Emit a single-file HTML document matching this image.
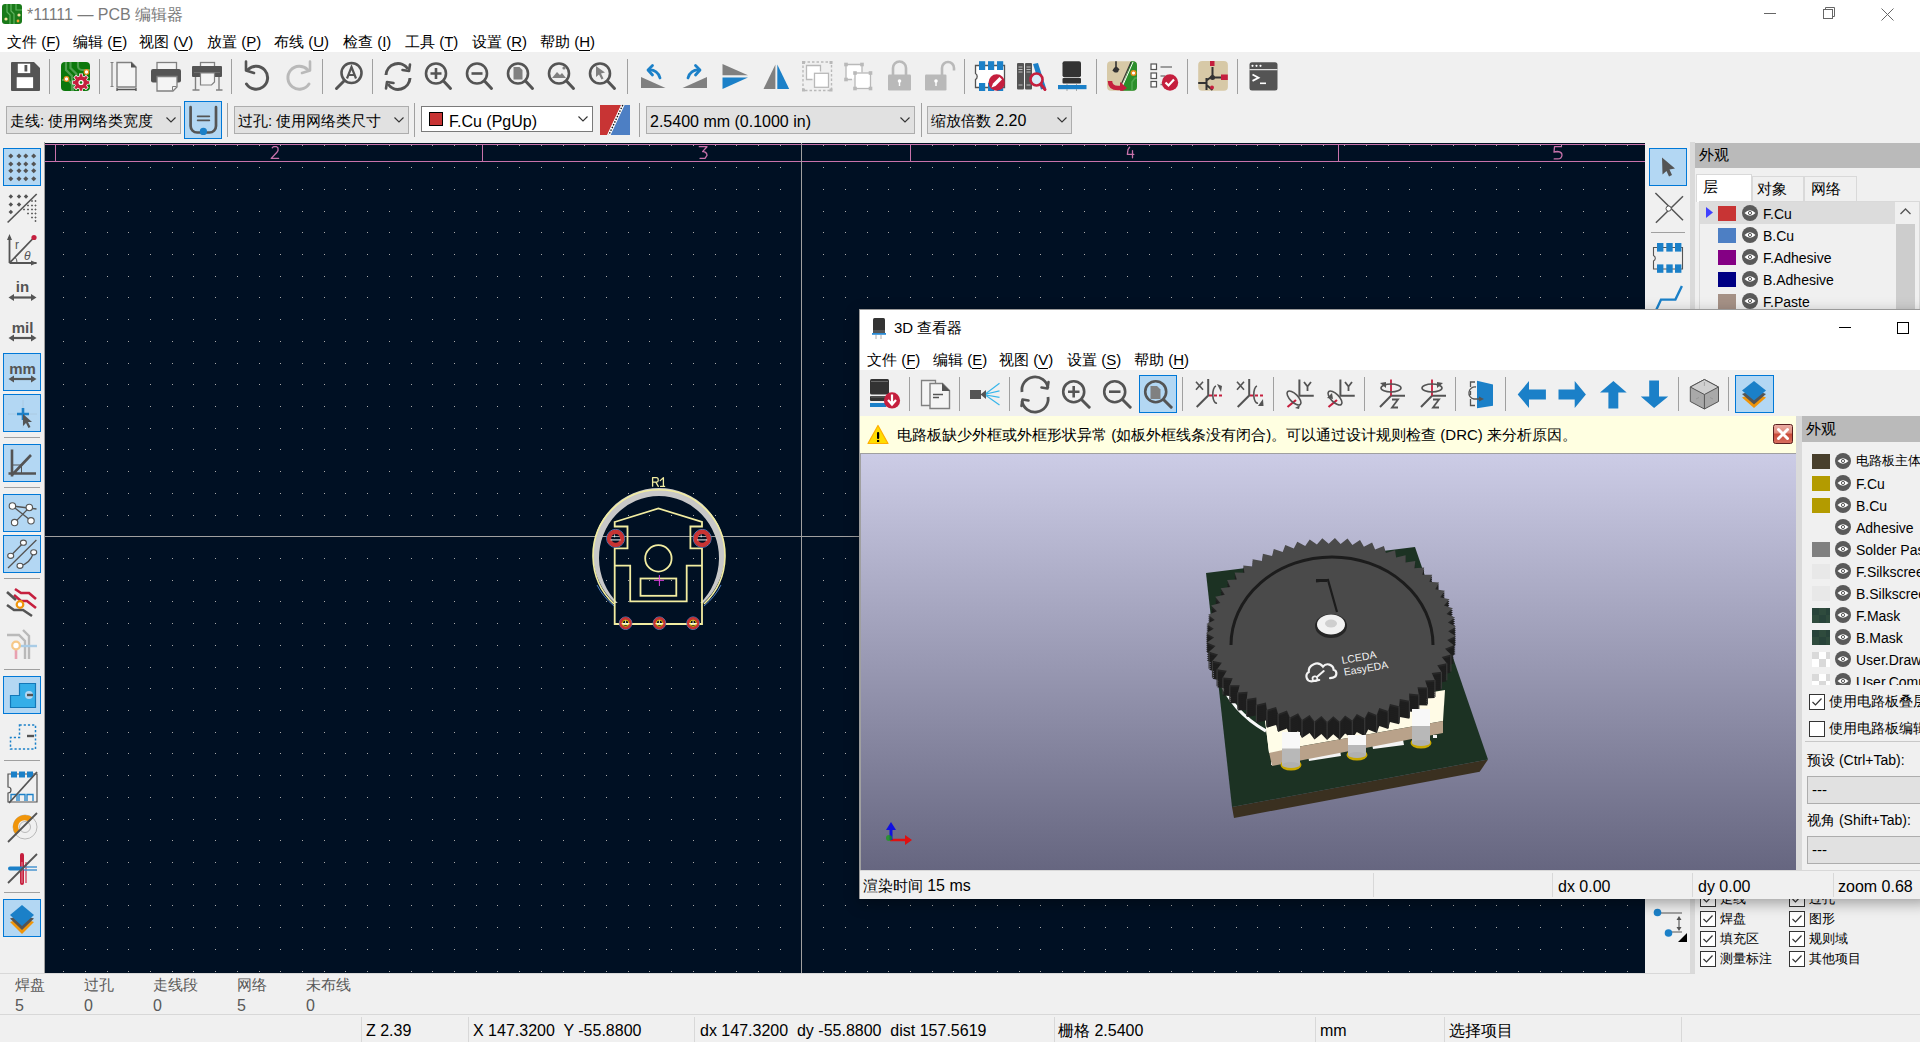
<!DOCTYPE html><html><head><meta charset="utf-8"><style>
*{box-sizing:border-box;margin:0;padding:0}
body{width:1920px;height:1042px;overflow:hidden;position:relative;background:#f0f0f0;font-family:"Liberation Sans", sans-serif;font-size:15px;color:#000}
.a{position:absolute;white-space:nowrap}
.t{position:absolute;white-space:nowrap;line-height:1}
svg{position:absolute;overflow:visible}
.cb{position:absolute;background:#e1e1e1;border:1px solid #adadad}
.sepv{position:absolute;width:1px;background:#a0a0a0}
.seph{position:absolute;height:1px;background:#a0a0a0}
.sel{position:absolute;background:#b3d7f3;border:1px solid #0078d7}
u{text-decoration:none;border-bottom:1px solid currentColor;}
</style></head><body>
<div class="a" style="left:0px;top:0px;width:1920px;height:52px;background:#fff;"></div>
<svg style="left:2px;top:4px;" width="20" height="20" viewBox="0 0 20 20"><rect x="0" y="0" width="20" height="20" rx="3" fill="#1a7a1a"/><path d="M5 0v8l3 3v9M9 0v7l3 3v10M14 0v6h6" stroke="#5fb35f" stroke-width="1.2" fill="none"/><circle cx="17" cy="11" r="1.6" fill="#f8e0a0"/><circle cx="4" cy="15" r="1.6" fill="#f8e0a0"/><circle cx="16" cy="17" r="1.4" fill="#f0a030"/></svg>
<div class="t" style="left:27px;top:7px;font-size:16px;color:#7a7a7a;">*11111 — PCB 编辑器</div>
<svg style="left:1764px;top:13px;" width="13" height="2" viewBox="0 0 13 2"><rect x="0" y="0" width="12" height="1" fill="#666"/></svg>
<svg style="left:1823px;top:7px;" width="14" height="14" viewBox="0 0 14 14"><rect x="0.5" y="2.5" width="9" height="9" fill="none" stroke="#666"/><path d="M2.5 2.5v-2h9v9h-2" fill="none" stroke="#666"/></svg>
<svg style="left:1881px;top:8px;" width="14" height="14" viewBox="0 0 14 14"><path d="M0.5 0.5L12.5 12.5M12.5 0.5L0.5 12.5" stroke="#666" stroke-width="1"/></svg>
<div class="t" style="left:7px;top:34px;font-size:15px;color:#000;">文件 (<u>F</u>)</div>
<div class="t" style="left:73px;top:34px;font-size:15px;color:#000;">编辑 (<u>E</u>)</div>
<div class="t" style="left:139px;top:34px;font-size:15px;color:#000;">视图 (<u>V</u>)</div>
<div class="t" style="left:207px;top:34px;font-size:15px;color:#000;">放置 (<u>P</u>)</div>
<div class="t" style="left:274px;top:34px;font-size:15px;color:#000;">布线 (<u>U</u>)</div>
<div class="t" style="left:343px;top:34px;font-size:15px;color:#000;">检查 (<u>I</u>)</div>
<div class="t" style="left:405px;top:34px;font-size:15px;color:#000;">工具 (<u>T</u>)</div>
<div class="t" style="left:472px;top:34px;font-size:15px;color:#000;">设置 (<u>R</u>)</div>
<div class="t" style="left:540px;top:34px;font-size:15px;color:#000;">帮助 (<u>H</u>)</div>
<div class="a" style="left:49px;top:59px;width:1px;height:35px;background:#a0a0a0;"></div>
<div class="a" style="left:99px;top:59px;width:1px;height:35px;background:#a0a0a0;"></div>
<div class="a" style="left:231px;top:59px;width:1px;height:35px;background:#a0a0a0;"></div>
<div class="a" style="left:322px;top:59px;width:1px;height:35px;background:#a0a0a0;"></div>
<div class="a" style="left:372px;top:59px;width:1px;height:35px;background:#a0a0a0;"></div>
<div class="a" style="left:627px;top:59px;width:1px;height:35px;background:#a0a0a0;"></div>
<div class="a" style="left:964px;top:59px;width:1px;height:35px;background:#a0a0a0;"></div>
<div class="a" style="left:1096px;top:59px;width:1px;height:35px;background:#a0a0a0;"></div>
<div class="a" style="left:1187px;top:59px;width:1px;height:35px;background:#a0a0a0;"></div>
<div class="a" style="left:1237px;top:59px;width:1px;height:35px;background:#a0a0a0;"></div>
<svg style="left:0px;top:52px;" width="1300" height="48" viewBox="0 0 1300 48"><g transform="translate(0,-52)"><path d="M12 62h22l6 6v22a1 1 0 0 1 -1 1h-27a1 1 0 0 1 -1 -1v-27a1 1 0 0 1 1 -1z" fill="#545454"/><rect x="17.8" y="63.7" width="12.4" height="9.4" fill="#fff"/><rect x="24.5" y="65" width="2.8" height="6.5" fill="#545454"/><rect x="16.7" y="77.2" width="16.4" height="10.9" fill="#fff"/><rect x="61" y="62" width="29" height="29" rx="4" fill="#0c780c"/><path d="M66 62v8l6 6v15M70.5 62v6l6 6v4M78 62v4a4 4 0 0 0 4 4h8" stroke="#4e9e4e" stroke-width="2.2" fill="none"/><path d="M62 80h6l5 5v6" stroke="#4e9e4e" stroke-width="2" fill="none"/><circle cx="66.5" cy="79" r="2.3" fill="#fff" stroke="#e98a1a" stroke-width="1.2"/><circle cx="86.5" cy="72" r="2.3" fill="#fff" stroke="#e98a1a" stroke-width="1.2"/><polygon points="87.1,81.1 89.2,81.2 89.2,83.8 87.1,83.9 86.2,85.8 87.7,87.4 85.9,89.2 84.3,87.7 82.4,88.6 82.3,90.7 79.7,90.7 79.6,88.6 77.7,87.7 76.1,89.2 74.3,87.4 75.8,85.8 74.9,83.9 72.8,83.8 72.8,81.2 74.9,81.1 75.8,79.2 74.3,77.6 76.1,75.8 77.7,77.3 79.6,76.4 79.7,74.3 82.3,74.3 82.4,76.4 84.3,77.3 85.9,75.8 87.7,77.6 86.2,79.2" fill="#c51f3e" stroke="#fff" stroke-width="1.4" paint-order="stroke"/><circle cx="81" cy="82.5" r="4.5" fill="#c51f3e"/><circle cx="81" cy="82.5" r="2.6" fill="#fff"/><circle cx="81" cy="82.5" r="1.3" fill="#0c780c"/><path d="M112 62.5v24M110.5 62.5h3M110.5 86.5h3M112 88.5h0" stroke="#808080" stroke-width="1.2" fill="none"/><path d="M117 62.5h14.5l4.5 4.5v20h-19z" fill="#f4f4f4" stroke="#808080" stroke-width="1.4"/><path d="M131 62v5.5h5.5z" fill="#545454"/><path d="M117 89.5h19M117 88v3M136 88v3" stroke="#545454" stroke-width="1.3"/><rect x="157" y="62.5" width="19.5" height="8" fill="#f4f4f4" stroke="#808080" stroke-width="1.3"/><rect x="151" y="69" width="30" height="13.5" rx="2" fill="#545454"/><path d="M157 76.5h20v10.5l-4 4h-16z" fill="#f4f4f4" stroke="#808080" stroke-width="1.3"/><path d="M172.5 90.5v-4h4" fill="none" stroke="#808080" stroke-width="1"/><rect x="200.5" y="62.5" width="14" height="4.5" fill="#f4f4f4" stroke="#808080" stroke-width="1.3"/><rect x="192" y="66" width="30" height="11" rx="1" fill="#545454"/><path d="M194 72.5h26" stroke="#808080" stroke-width="0.6"/><path d="M195.5 77v13M219 77v13M192.5 90h7M216 90h6.5" stroke="#808080" stroke-width="1.4"/><path d="M200.5 73h14v9l-3 3h-11z" fill="#f4f4f4" stroke="#808080" stroke-width="1.2"/><path d="M248 69.5 A11.5 11.5 0 1 1 246.5 84" fill="none" stroke="#545454" stroke-width="3" stroke-linecap="round"/><path d="M246 61.5v9l8 2.5" fill="none" stroke="#545454" stroke-width="2.6" stroke-linecap="round" stroke-linejoin="round"/><path d="M307.5 69.5 A11.5 11.5 0 1 0 309 84" fill="none" stroke="#b9b9b9" stroke-width="3" stroke-linecap="round"/><path d="M310 61.5v9l-8 2.5" fill="none" stroke="#b9b9b9" stroke-width="2.6" stroke-linecap="round" stroke-linejoin="round"/><circle cx="351.5" cy="73" r="10" fill="none" stroke="#545454" stroke-width="2.6"/><path d="M344.5 80.5l-8 8" stroke="#545454" stroke-width="3" stroke-linecap="round"/><path d="M347 78.5l4.5-11.5l4.5 11.5M348.5 75h6" fill="none" stroke="#545454" stroke-width="2.2"/><path d="M386 75 A12 12 0 0 1 408 69" fill="none" stroke="#545454" stroke-width="3"/><path d="M410 78 A12 12 0 0 1 388 84" fill="none" stroke="#545454" stroke-width="3"/><path d="M410 64.5l-1 6.5l-6.5 -1" fill="none" stroke="#545454" stroke-width="2.6" stroke-linecap="round" stroke-linejoin="round"/><path d="M386 88.5l1 -6.5l6.5 1" fill="none" stroke="#545454" stroke-width="2.6" stroke-linecap="round" stroke-linejoin="round"/><circle cx="436" cy="73.5" r="10" fill="none" stroke="#545454" stroke-width="2.6"/><path d="M443.5 81l7 7.5" stroke="#545454" stroke-width="3" stroke-linecap="round"/><path d="M436 68v11M430.5 73.5h11" stroke="#545454" stroke-width="2.6"/><circle cx="477" cy="73.5" r="10" fill="none" stroke="#545454" stroke-width="2.6"/><path d="M484.5 81l7 7.5" stroke="#545454" stroke-width="3" stroke-linecap="round"/><path d="M471.5 73.5h11" stroke="#545454" stroke-width="2.6"/><circle cx="518" cy="73.5" r="10" fill="none" stroke="#545454" stroke-width="2.6"/><path d="M525.5 81l7 7.5" stroke="#545454" stroke-width="3" stroke-linecap="round"/><path d="M513.5 67h6l3 3v9.5h-9z" fill="#808080"/><circle cx="559" cy="73.5" r="10" fill="none" stroke="#545454" stroke-width="2.6"/><path d="M566.5 81l7 7.5" stroke="#545454" stroke-width="3" stroke-linecap="round"/><path d="M552 78l5-6l3 3l2-2l4 5z" fill="#808080"/><circle cx="564" cy="68" r="1.6" fill="#808080"/><circle cx="600" cy="73.5" r="10" fill="none" stroke="#545454" stroke-width="2.6"/><path d="M607.5 81l7 7.5" stroke="#545454" stroke-width="3" stroke-linecap="round"/><path d="M596 66l9 6.5l-4 1l2.5 5l-2 1l-2.5-5l-3 2.5z" fill="#808080"/><polygon points="641,77 641,88 665.5,88" fill="#808080"/><path d="M660 78 A10 10 0 0 0 649 70" fill="none" stroke="#1b80c8" stroke-width="2.8" stroke-linecap="round"/><path d="M652.5 65.5l-4.5 4.5l4.5 5" fill="none" stroke="#1b80c8" stroke-width="2.8" stroke-linecap="round" stroke-linejoin="round"/><polygon points="682.5,88 707,77 707,88" fill="#808080"/><path d="M688 78 A10 10 0 0 1 699 70" fill="none" stroke="#1b80c8" stroke-width="2.8" stroke-linecap="round"/><path d="M695.5 65.5l4.5 4.5l-4.5 5" fill="none" stroke="#1b80c8" stroke-width="2.8" stroke-linecap="round" stroke-linejoin="round"/><polygon points="722.5,64 722.5,75.2 748,75.2" fill="#808080"/><polygon points="722.5,77.4 748,77.4 722.5,89" fill="#1b80c8"/><polygon points="775.4,64.4 775.4,89 763.5,89" fill="#808080"/><polygon points="777.3,64.4 777.3,89 789.2,89" fill="#1b80c8"/><rect x="803" y="62" width="28.5" height="28.5" fill="none" stroke="#b9b9b9" stroke-width="1.4" stroke-dasharray="2.5 2"/><rect x="802" y="61" width="3" height="3" fill="#b9b9b9"/><rect x="829.5" y="61" width="3" height="3" fill="#b9b9b9"/><rect x="802" y="88.5" width="3" height="3" fill="#b9b9b9"/><rect x="829.5" y="88.5" width="3" height="3" fill="#b9b9b9"/><path d="M812.5 79.5h-6v-14h14v6" fill="#fff" stroke="#b9b9b9" stroke-width="1.3"/><rect x="814.5" y="73.3" width="14" height="14" fill="#fff" stroke="#b9b9b9" stroke-width="1.3"/><path d="M852 79.5h-6v-15h16v8" fill="#fff" stroke="#b9b9b9" stroke-width="1.3"/><rect x="855" y="73" width="15.5" height="15.5" fill="#fff" stroke="#b9b9b9" stroke-width="1.3"/><rect x="844.2" y="62.7" width="3.6" height="3.6" fill="#b9b9b9"/><rect x="860.2" y="62.7" width="3.6" height="3.6" fill="#b9b9b9"/><rect x="844.2" y="77.7" width="3.6" height="3.6" fill="#b9b9b9"/><rect x="853.2" y="71.2" width="3.6" height="3.6" fill="#b9b9b9"/><rect x="868.7" y="71.2" width="3.6" height="3.6" fill="#b9b9b9"/><rect x="853.2" y="86.7" width="3.6" height="3.6" fill="#b9b9b9"/><rect x="868.7" y="86.7" width="3.6" height="3.6" fill="#b9b9b9"/><path d="M893 75v-7a6.5 6.5 0 0 1 13 0v7" fill="none" stroke="#b9b9b9" stroke-width="2.6"/><rect x="888" y="74.5" width="23" height="16" rx="1.2" fill="#b9b9b9"/><circle cx="899.5" cy="81" r="1.8" fill="#fff"/><path d="M899.5 81v5" stroke="#fff" stroke-width="1.4"/><path d="M942 75v-7a6 6 0 0 1 12 0v2.5" fill="none" stroke="#b9b9b9" stroke-width="2.6"/><rect x="925" y="74.5" width="21.5" height="16" rx="1.2" fill="#b9b9b9"/><circle cx="936" cy="81" r="1.8" fill="#fff"/><path d="M936 81v5" stroke="#fff" stroke-width="1.4"/><path d="M975.5 65.5h29v22h-29v-8a3.5 3.5 0 0 0 0 -6z" fill="#fff" stroke="#545454" stroke-width="1.3"/><rect x="979" y="61.2" width="6.2" height="8.8" fill="#1b80c8"/><rect x="979" y="83" width="6.2" height="8" fill="#1b80c8"/><rect x="988" y="61.2" width="6.2" height="8.8" fill="#1b80c8"/><rect x="988" y="83" width="6.2" height="8" fill="#1b80c8"/><rect x="997" y="61.2" width="6.2" height="8.8" fill="#1b80c8"/><rect x="997" y="83" width="6.2" height="8" fill="#1b80c8"/><circle cx="996.7" cy="82.5" r="8.2" fill="#c51f3e"/><path d="M991.5 87.5l1.5-4l6.5-6.5l2.5 2.5l-6.5 6.5z" fill="#fff"/><rect x="1017" y="63" width="7" height="26.5" rx="1" fill="#545454"/><rect x="1025" y="63" width="7" height="26.5" rx="1" fill="#545454"/><path d="M1018.5 67h4M1018.5 69.5h4M1018.5 72h4M1026.5 67h4M1026.5 69.5h4M1026.5 72h4M1018.5 85h4M1026.5 85h4" stroke="#bbb" stroke-width="1"/><polygon points="1033,64 1038,63 1046,88 1041,89.5" fill="#1b80c8"/><circle cx="1036.5" cy="79.5" r="6" fill="#d8ecf8" stroke="#c51f3e" stroke-width="2.6"/><path d="M1041 84.5l4 5" stroke="#c51f3e" stroke-width="3" stroke-linecap="round"/><rect x="1062.5" y="61.2" width="18.5" height="16" rx="2" fill="#333"/><rect x="1062.5" y="78" width="18.5" height="5.5" rx="1" fill="#333"/><path d="M1067 84v7M1076.5 84v7" stroke="#aaa" stroke-width="1"/><rect x="1058" y="85" width="28.5" height="4.2" fill="#1b80c8"/><clipPath id="c26"><rect x="1107" y="61.2" width="30" height="29.5" rx="4"/></clipPath><g clip-path="url(#c26)"><rect x="1107" y="61" width="30" height="30" fill="#d7c9a7"/><polygon points="1131,61 1140,61 1140,91 1121,91" fill="#2b8f2b"/><path d="M1131 62L1120.5 86" stroke="#333" stroke-width="1.1"/><path d="M1133 62L1122.5 86" stroke="#fff" stroke-width="1"/><path d="M1116 61v6M1116 67l-3 4M1116 67l3 3" stroke="#333" stroke-width="1.6"/><circle cx="1116" cy="70" r="2.6" fill="#333"/><circle cx="1133.5" cy="73" r="2.3" fill="#fff" stroke="#e98a1a" stroke-width="1.4"/><path d="M1140 78h-5l-3 4v9" stroke="#4ea84e" stroke-width="1.6" fill="none"/><path d="M1110 81q0 7 8 7h3" fill="none" stroke="#c51f3e" stroke-width="4.5"/><polygon points="1120,82 1127,88 1120,93" fill="#c51f3e"/></g><rect x="1151" y="64" width="5.5" height="5.5" fill="#fff" stroke="#545454" stroke-width="1.2"/><rect x="1151" y="73" width="5.5" height="5.5" fill="#fff" stroke="#545454" stroke-width="1.2"/><rect x="1151" y="81.5" width="5.5" height="5.5" fill="#fff" stroke="#545454" stroke-width="1.2"/><path d="M1160.5 67h11.5M1160.5 76h5M1160.5 84.5h3" stroke="#808080" stroke-width="1.3"/><circle cx="1170" cy="82.5" r="8.2" fill="#c51f3e"/><path d="M1165.5 82.5l3 3l5.5-6" fill="none" stroke="#fff" stroke-width="2.2"/><rect x="1198.2" y="61" width="29.7" height="29.8" rx="4" fill="#d7c9a7"/><path d="M1212.5 67v10M1212.5 77.5h9M1198.2 83h8M1206.5 78v12M1206.5 80.5l6-4.5M1206.5 85l6 5" stroke="#333" stroke-width="2" fill="none"/><circle cx="1212.5" cy="77.5" r="2.5" fill="#333"/><rect x="1210" y="61" width="4.5" height="5" fill="#c51f3e"/><rect x="1221" y="74.5" width="6.8" height="5.5" fill="#c51f3e"/><circle cx="1212" cy="87.5" r="2" fill="#c51f3e"/><rect x="1249.5" y="62.2" width="28" height="28.2" rx="2.5" fill="#545454"/><path d="M1249.5 69.7h28" stroke="#fff" stroke-width="1"/><circle cx="1252.5" cy="65.8" r="1.1" fill="#fff"/><circle cx="1256.5" cy="65.8" r="1.1" fill="#fff"/><circle cx="1260.5" cy="65.8" r="1.1" fill="#fff"/><path d="M1252.5 74.5l6 3.2l-6 3.2" fill="none" stroke="#fff" stroke-width="1.8"/><path d="M1260 83.3h6" stroke="#fff" stroke-width="1.6"/></g></svg>
<div class="a" style="left:6px;top:106px;width:175px;height:28px;background:#e1e1e1;border:1px solid #adadad"></div>
<svg style="left:165.5px;top:117.0px;" width="10" height="6" viewBox="0 0 10 6"><path d="M0.5 0.5L5 5L9.5 0.5" fill="none" stroke="#333" stroke-width="1.1"/></svg>
<div class="t" style="left:10px;top:113px;font-size:15px;color:#000;">走线: 使用网络类宽度</div>
<div class="a" style="left:184px;top:101px;width:38px;height:38px;background:#b3d7f3;border:1px solid #0078d7"></div>
<svg style="left:184px;top:101px;" width="38" height="38" viewBox="0 0 38 38"><path d="M6.6 6.2V25a6.5 6.5 0 0 0 6.5 6.5h12.4a6.5 6.5 0 0 0 6.5 -6.5V6.2" fill="none" stroke="#555" stroke-width="2.7" stroke-linecap="round"/><path d="M13.6 15.4h11.8M13.6 19.4h11.8" stroke="#555" stroke-width="1.6" stroke-linecap="round"/><circle cx="19.4" cy="30.4" r="3.6" fill="#1b80c8"/></svg>
<div class="a" style="left:227px;top:103px;width:1px;height:34px;background:#a0a0a0;"></div>
<div class="a" style="left:234px;top:106px;width:175px;height:28px;background:#e1e1e1;border:1px solid #adadad"></div>
<svg style="left:393.5px;top:117.0px;" width="10" height="6" viewBox="0 0 10 6"><path d="M0.5 0.5L5 5L9.5 0.5" fill="none" stroke="#333" stroke-width="1.1"/></svg>
<div class="t" style="left:238px;top:113px;font-size:15px;color:#000;">过孔: 使用网络类尺寸</div>
<div class="a" style="left:414px;top:103px;width:1px;height:34px;background:#a0a0a0;"></div>
<div class="a" style="left:421px;top:106px;width:172px;height:26px;background:#fff;border:1px solid #7a7a7a"></div>
<svg style="left:577.5px;top:116.0px;" width="10" height="6" viewBox="0 0 10 6"><path d="M0.5 0.5L5 5L9.5 0.5" fill="none" stroke="#333" stroke-width="1.1"/></svg>
<div class="a" style="left:429px;top:112px;width:14px;height:14px;background:#c83434;border:1px solid #000"></div>
<div class="t" style="left:449px;top:113.5px;font-size:16px;color:#000;">F.Cu (PgUp)</div>
<svg style="left:600px;top:105px;" width="30" height="30" viewBox="0 0 30 30"><polygon points="0,0 21,0 7,30 0,30" fill="#c83434"/><polygon points="24.6,0 30,0 30,30 10.6,30" fill="#4d7fc4"/><path d="M22.8 0L8.8 30" stroke="#fff" stroke-width="2.6"/><path d="M22.8 0L8.8 30" stroke="#111" stroke-width="1.4" stroke-dasharray="1.5 1.5"/></svg>
<div class="a" style="left:639px;top:103px;width:1px;height:34px;background:#a0a0a0;"></div>
<div class="a" style="left:646px;top:106px;width:269px;height:28px;background:#e1e1e1;border:1px solid #adadad"></div>
<svg style="left:899.5px;top:117.0px;" width="10" height="6" viewBox="0 0 10 6"><path d="M0.5 0.5L5 5L9.5 0.5" fill="none" stroke="#333" stroke-width="1.1"/></svg>
<div class="t" style="left:650px;top:113.5px;font-size:16px;color:#000;">2.5400 mm (0.1000 in)</div>
<div class="a" style="left:921px;top:103px;width:1px;height:34px;background:#a0a0a0;"></div>
<div class="a" style="left:927px;top:106px;width:145px;height:28px;background:#e1e1e1;border:1px solid #adadad"></div>
<svg style="left:1056.5px;top:117.0px;" width="10" height="6" viewBox="0 0 10 6"><path d="M0.5 0.5L5 5L9.5 0.5" fill="none" stroke="#333" stroke-width="1.1"/></svg>
<div class="t" style="left:931px;top:112.5px;font-size:15px;color:#000;">缩放倍数 <span style="font-size:16px">2.20</span></div>
<svg style="left:45px;top:143px;" width="1600" height="830" viewBox="0 0 1600 830"><rect x="0" y="0" width="1600" height="830" fill="#001023"/><path d="M18 2h1v1h-1zM18 24h1v1h-1zM18 46h1v1h-1zM18 68h1v1h-1zM18 89h1v1h-1zM18 111h1v1h-1zM18 133h1v1h-1zM18 154h1v1h-1zM18 176h1v1h-1zM18 198h1v1h-1zM18 220h1v1h-1zM18 241h1v1h-1zM18 263h1v1h-1zM18 285h1v1h-1zM18 306h1v1h-1zM18 328h1v1h-1zM18 350h1v1h-1zM18 372h1v1h-1zM18 393h1v1h-1zM18 415h1v1h-1zM18 437h1v1h-1zM18 458h1v1h-1zM18 480h1v1h-1zM18 502h1v1h-1zM18 524h1v1h-1zM18 545h1v1h-1zM18 567h1v1h-1zM18 589h1v1h-1zM18 610h1v1h-1zM18 632h1v1h-1zM18 654h1v1h-1zM18 676h1v1h-1zM18 697h1v1h-1zM18 719h1v1h-1zM18 741h1v1h-1zM18 762h1v1h-1zM18 784h1v1h-1zM18 806h1v1h-1zM18 828h1v1h-1zM40 2h1v1h-1zM40 24h1v1h-1zM40 46h1v1h-1zM40 68h1v1h-1zM40 89h1v1h-1zM40 111h1v1h-1zM40 133h1v1h-1zM40 154h1v1h-1zM40 176h1v1h-1zM40 198h1v1h-1zM40 220h1v1h-1zM40 241h1v1h-1zM40 263h1v1h-1zM40 285h1v1h-1zM40 306h1v1h-1zM40 328h1v1h-1zM40 350h1v1h-1zM40 372h1v1h-1zM40 393h1v1h-1zM40 415h1v1h-1zM40 437h1v1h-1zM40 458h1v1h-1zM40 480h1v1h-1zM40 502h1v1h-1zM40 524h1v1h-1zM40 545h1v1h-1zM40 567h1v1h-1zM40 589h1v1h-1zM40 610h1v1h-1zM40 632h1v1h-1zM40 654h1v1h-1zM40 676h1v1h-1zM40 697h1v1h-1zM40 719h1v1h-1zM40 741h1v1h-1zM40 762h1v1h-1zM40 784h1v1h-1zM40 806h1v1h-1zM40 828h1v1h-1zM62 2h1v1h-1zM62 24h1v1h-1zM62 46h1v1h-1zM62 68h1v1h-1zM62 89h1v1h-1zM62 111h1v1h-1zM62 133h1v1h-1zM62 154h1v1h-1zM62 176h1v1h-1zM62 198h1v1h-1zM62 220h1v1h-1zM62 241h1v1h-1zM62 263h1v1h-1zM62 285h1v1h-1zM62 306h1v1h-1zM62 328h1v1h-1zM62 350h1v1h-1zM62 372h1v1h-1zM62 393h1v1h-1zM62 415h1v1h-1zM62 437h1v1h-1zM62 458h1v1h-1zM62 480h1v1h-1zM62 502h1v1h-1zM62 524h1v1h-1zM62 545h1v1h-1zM62 567h1v1h-1zM62 589h1v1h-1zM62 610h1v1h-1zM62 632h1v1h-1zM62 654h1v1h-1zM62 676h1v1h-1zM62 697h1v1h-1zM62 719h1v1h-1zM62 741h1v1h-1zM62 762h1v1h-1zM62 784h1v1h-1zM62 806h1v1h-1zM62 828h1v1h-1zM83 2h1v1h-1zM83 24h1v1h-1zM83 46h1v1h-1zM83 68h1v1h-1zM83 89h1v1h-1zM83 111h1v1h-1zM83 133h1v1h-1zM83 154h1v1h-1zM83 176h1v1h-1zM83 198h1v1h-1zM83 220h1v1h-1zM83 241h1v1h-1zM83 263h1v1h-1zM83 285h1v1h-1zM83 306h1v1h-1zM83 328h1v1h-1zM83 350h1v1h-1zM83 372h1v1h-1zM83 393h1v1h-1zM83 415h1v1h-1zM83 437h1v1h-1zM83 458h1v1h-1zM83 480h1v1h-1zM83 502h1v1h-1zM83 524h1v1h-1zM83 545h1v1h-1zM83 567h1v1h-1zM83 589h1v1h-1zM83 610h1v1h-1zM83 632h1v1h-1zM83 654h1v1h-1zM83 676h1v1h-1zM83 697h1v1h-1zM83 719h1v1h-1zM83 741h1v1h-1zM83 762h1v1h-1zM83 784h1v1h-1zM83 806h1v1h-1zM83 828h1v1h-1zM105 2h1v1h-1zM105 24h1v1h-1zM105 46h1v1h-1zM105 68h1v1h-1zM105 89h1v1h-1zM105 111h1v1h-1zM105 133h1v1h-1zM105 154h1v1h-1zM105 176h1v1h-1zM105 198h1v1h-1zM105 220h1v1h-1zM105 241h1v1h-1zM105 263h1v1h-1zM105 285h1v1h-1zM105 306h1v1h-1zM105 328h1v1h-1zM105 350h1v1h-1zM105 372h1v1h-1zM105 393h1v1h-1zM105 415h1v1h-1zM105 437h1v1h-1zM105 458h1v1h-1zM105 480h1v1h-1zM105 502h1v1h-1zM105 524h1v1h-1zM105 545h1v1h-1zM105 567h1v1h-1zM105 589h1v1h-1zM105 610h1v1h-1zM105 632h1v1h-1zM105 654h1v1h-1zM105 676h1v1h-1zM105 697h1v1h-1zM105 719h1v1h-1zM105 741h1v1h-1zM105 762h1v1h-1zM105 784h1v1h-1zM105 806h1v1h-1zM105 828h1v1h-1zM127 2h1v1h-1zM127 24h1v1h-1zM127 46h1v1h-1zM127 68h1v1h-1zM127 89h1v1h-1zM127 111h1v1h-1zM127 133h1v1h-1zM127 154h1v1h-1zM127 176h1v1h-1zM127 198h1v1h-1zM127 220h1v1h-1zM127 241h1v1h-1zM127 263h1v1h-1zM127 285h1v1h-1zM127 306h1v1h-1zM127 328h1v1h-1zM127 350h1v1h-1zM127 372h1v1h-1zM127 393h1v1h-1zM127 415h1v1h-1zM127 437h1v1h-1zM127 458h1v1h-1zM127 480h1v1h-1zM127 502h1v1h-1zM127 524h1v1h-1zM127 545h1v1h-1zM127 567h1v1h-1zM127 589h1v1h-1zM127 610h1v1h-1zM127 632h1v1h-1zM127 654h1v1h-1zM127 676h1v1h-1zM127 697h1v1h-1zM127 719h1v1h-1zM127 741h1v1h-1zM127 762h1v1h-1zM127 784h1v1h-1zM127 806h1v1h-1zM127 828h1v1h-1zM148 2h1v1h-1zM148 24h1v1h-1zM148 46h1v1h-1zM148 68h1v1h-1zM148 89h1v1h-1zM148 111h1v1h-1zM148 133h1v1h-1zM148 154h1v1h-1zM148 176h1v1h-1zM148 198h1v1h-1zM148 220h1v1h-1zM148 241h1v1h-1zM148 263h1v1h-1zM148 285h1v1h-1zM148 306h1v1h-1zM148 328h1v1h-1zM148 350h1v1h-1zM148 372h1v1h-1zM148 393h1v1h-1zM148 415h1v1h-1zM148 437h1v1h-1zM148 458h1v1h-1zM148 480h1v1h-1zM148 502h1v1h-1zM148 524h1v1h-1zM148 545h1v1h-1zM148 567h1v1h-1zM148 589h1v1h-1zM148 610h1v1h-1zM148 632h1v1h-1zM148 654h1v1h-1zM148 676h1v1h-1zM148 697h1v1h-1zM148 719h1v1h-1zM148 741h1v1h-1zM148 762h1v1h-1zM148 784h1v1h-1zM148 806h1v1h-1zM148 828h1v1h-1zM170 2h1v1h-1zM170 24h1v1h-1zM170 46h1v1h-1zM170 68h1v1h-1zM170 89h1v1h-1zM170 111h1v1h-1zM170 133h1v1h-1zM170 154h1v1h-1zM170 176h1v1h-1zM170 198h1v1h-1zM170 220h1v1h-1zM170 241h1v1h-1zM170 263h1v1h-1zM170 285h1v1h-1zM170 306h1v1h-1zM170 328h1v1h-1zM170 350h1v1h-1zM170 372h1v1h-1zM170 393h1v1h-1zM170 415h1v1h-1zM170 437h1v1h-1zM170 458h1v1h-1zM170 480h1v1h-1zM170 502h1v1h-1zM170 524h1v1h-1zM170 545h1v1h-1zM170 567h1v1h-1zM170 589h1v1h-1zM170 610h1v1h-1zM170 632h1v1h-1zM170 654h1v1h-1zM170 676h1v1h-1zM170 697h1v1h-1zM170 719h1v1h-1zM170 741h1v1h-1zM170 762h1v1h-1zM170 784h1v1h-1zM170 806h1v1h-1zM170 828h1v1h-1zM192 2h1v1h-1zM192 24h1v1h-1zM192 46h1v1h-1zM192 68h1v1h-1zM192 89h1v1h-1zM192 111h1v1h-1zM192 133h1v1h-1zM192 154h1v1h-1zM192 176h1v1h-1zM192 198h1v1h-1zM192 220h1v1h-1zM192 241h1v1h-1zM192 263h1v1h-1zM192 285h1v1h-1zM192 306h1v1h-1zM192 328h1v1h-1zM192 350h1v1h-1zM192 372h1v1h-1zM192 393h1v1h-1zM192 415h1v1h-1zM192 437h1v1h-1zM192 458h1v1h-1zM192 480h1v1h-1zM192 502h1v1h-1zM192 524h1v1h-1zM192 545h1v1h-1zM192 567h1v1h-1zM192 589h1v1h-1zM192 610h1v1h-1zM192 632h1v1h-1zM192 654h1v1h-1zM192 676h1v1h-1zM192 697h1v1h-1zM192 719h1v1h-1zM192 741h1v1h-1zM192 762h1v1h-1zM192 784h1v1h-1zM192 806h1v1h-1zM192 828h1v1h-1zM214 2h1v1h-1zM214 24h1v1h-1zM214 46h1v1h-1zM214 68h1v1h-1zM214 89h1v1h-1zM214 111h1v1h-1zM214 133h1v1h-1zM214 154h1v1h-1zM214 176h1v1h-1zM214 198h1v1h-1zM214 220h1v1h-1zM214 241h1v1h-1zM214 263h1v1h-1zM214 285h1v1h-1zM214 306h1v1h-1zM214 328h1v1h-1zM214 350h1v1h-1zM214 372h1v1h-1zM214 393h1v1h-1zM214 415h1v1h-1zM214 437h1v1h-1zM214 458h1v1h-1zM214 480h1v1h-1zM214 502h1v1h-1zM214 524h1v1h-1zM214 545h1v1h-1zM214 567h1v1h-1zM214 589h1v1h-1zM214 610h1v1h-1zM214 632h1v1h-1zM214 654h1v1h-1zM214 676h1v1h-1zM214 697h1v1h-1zM214 719h1v1h-1zM214 741h1v1h-1zM214 762h1v1h-1zM214 784h1v1h-1zM214 806h1v1h-1zM214 828h1v1h-1zM235 2h1v1h-1zM235 24h1v1h-1zM235 46h1v1h-1zM235 68h1v1h-1zM235 89h1v1h-1zM235 111h1v1h-1zM235 133h1v1h-1zM235 154h1v1h-1zM235 176h1v1h-1zM235 198h1v1h-1zM235 220h1v1h-1zM235 241h1v1h-1zM235 263h1v1h-1zM235 285h1v1h-1zM235 306h1v1h-1zM235 328h1v1h-1zM235 350h1v1h-1zM235 372h1v1h-1zM235 393h1v1h-1zM235 415h1v1h-1zM235 437h1v1h-1zM235 458h1v1h-1zM235 480h1v1h-1zM235 502h1v1h-1zM235 524h1v1h-1zM235 545h1v1h-1zM235 567h1v1h-1zM235 589h1v1h-1zM235 610h1v1h-1zM235 632h1v1h-1zM235 654h1v1h-1zM235 676h1v1h-1zM235 697h1v1h-1zM235 719h1v1h-1zM235 741h1v1h-1zM235 762h1v1h-1zM235 784h1v1h-1zM235 806h1v1h-1zM235 828h1v1h-1zM257 2h1v1h-1zM257 24h1v1h-1zM257 46h1v1h-1zM257 68h1v1h-1zM257 89h1v1h-1zM257 111h1v1h-1zM257 133h1v1h-1zM257 154h1v1h-1zM257 176h1v1h-1zM257 198h1v1h-1zM257 220h1v1h-1zM257 241h1v1h-1zM257 263h1v1h-1zM257 285h1v1h-1zM257 306h1v1h-1zM257 328h1v1h-1zM257 350h1v1h-1zM257 372h1v1h-1zM257 393h1v1h-1zM257 415h1v1h-1zM257 437h1v1h-1zM257 458h1v1h-1zM257 480h1v1h-1zM257 502h1v1h-1zM257 524h1v1h-1zM257 545h1v1h-1zM257 567h1v1h-1zM257 589h1v1h-1zM257 610h1v1h-1zM257 632h1v1h-1zM257 654h1v1h-1zM257 676h1v1h-1zM257 697h1v1h-1zM257 719h1v1h-1zM257 741h1v1h-1zM257 762h1v1h-1zM257 784h1v1h-1zM257 806h1v1h-1zM257 828h1v1h-1zM279 2h1v1h-1zM279 24h1v1h-1zM279 46h1v1h-1zM279 68h1v1h-1zM279 89h1v1h-1zM279 111h1v1h-1zM279 133h1v1h-1zM279 154h1v1h-1zM279 176h1v1h-1zM279 198h1v1h-1zM279 220h1v1h-1zM279 241h1v1h-1zM279 263h1v1h-1zM279 285h1v1h-1zM279 306h1v1h-1zM279 328h1v1h-1zM279 350h1v1h-1zM279 372h1v1h-1zM279 393h1v1h-1zM279 415h1v1h-1zM279 437h1v1h-1zM279 458h1v1h-1zM279 480h1v1h-1zM279 502h1v1h-1zM279 524h1v1h-1zM279 545h1v1h-1zM279 567h1v1h-1zM279 589h1v1h-1zM279 610h1v1h-1zM279 632h1v1h-1zM279 654h1v1h-1zM279 676h1v1h-1zM279 697h1v1h-1zM279 719h1v1h-1zM279 741h1v1h-1zM279 762h1v1h-1zM279 784h1v1h-1zM279 806h1v1h-1zM279 828h1v1h-1zM300 2h1v1h-1zM300 24h1v1h-1zM300 46h1v1h-1zM300 68h1v1h-1zM300 89h1v1h-1zM300 111h1v1h-1zM300 133h1v1h-1zM300 154h1v1h-1zM300 176h1v1h-1zM300 198h1v1h-1zM300 220h1v1h-1zM300 241h1v1h-1zM300 263h1v1h-1zM300 285h1v1h-1zM300 306h1v1h-1zM300 328h1v1h-1zM300 350h1v1h-1zM300 372h1v1h-1zM300 393h1v1h-1zM300 415h1v1h-1zM300 437h1v1h-1zM300 458h1v1h-1zM300 480h1v1h-1zM300 502h1v1h-1zM300 524h1v1h-1zM300 545h1v1h-1zM300 567h1v1h-1zM300 589h1v1h-1zM300 610h1v1h-1zM300 632h1v1h-1zM300 654h1v1h-1zM300 676h1v1h-1zM300 697h1v1h-1zM300 719h1v1h-1zM300 741h1v1h-1zM300 762h1v1h-1zM300 784h1v1h-1zM300 806h1v1h-1zM300 828h1v1h-1zM322 2h1v1h-1zM322 24h1v1h-1zM322 46h1v1h-1zM322 68h1v1h-1zM322 89h1v1h-1zM322 111h1v1h-1zM322 133h1v1h-1zM322 154h1v1h-1zM322 176h1v1h-1zM322 198h1v1h-1zM322 220h1v1h-1zM322 241h1v1h-1zM322 263h1v1h-1zM322 285h1v1h-1zM322 306h1v1h-1zM322 328h1v1h-1zM322 350h1v1h-1zM322 372h1v1h-1zM322 393h1v1h-1zM322 415h1v1h-1zM322 437h1v1h-1zM322 458h1v1h-1zM322 480h1v1h-1zM322 502h1v1h-1zM322 524h1v1h-1zM322 545h1v1h-1zM322 567h1v1h-1zM322 589h1v1h-1zM322 610h1v1h-1zM322 632h1v1h-1zM322 654h1v1h-1zM322 676h1v1h-1zM322 697h1v1h-1zM322 719h1v1h-1zM322 741h1v1h-1zM322 762h1v1h-1zM322 784h1v1h-1zM322 806h1v1h-1zM322 828h1v1h-1zM344 2h1v1h-1zM344 24h1v1h-1zM344 46h1v1h-1zM344 68h1v1h-1zM344 89h1v1h-1zM344 111h1v1h-1zM344 133h1v1h-1zM344 154h1v1h-1zM344 176h1v1h-1zM344 198h1v1h-1zM344 220h1v1h-1zM344 241h1v1h-1zM344 263h1v1h-1zM344 285h1v1h-1zM344 306h1v1h-1zM344 328h1v1h-1zM344 350h1v1h-1zM344 372h1v1h-1zM344 393h1v1h-1zM344 415h1v1h-1zM344 437h1v1h-1zM344 458h1v1h-1zM344 480h1v1h-1zM344 502h1v1h-1zM344 524h1v1h-1zM344 545h1v1h-1zM344 567h1v1h-1zM344 589h1v1h-1zM344 610h1v1h-1zM344 632h1v1h-1zM344 654h1v1h-1zM344 676h1v1h-1zM344 697h1v1h-1zM344 719h1v1h-1zM344 741h1v1h-1zM344 762h1v1h-1zM344 784h1v1h-1zM344 806h1v1h-1zM344 828h1v1h-1zM366 2h1v1h-1zM366 24h1v1h-1zM366 46h1v1h-1zM366 68h1v1h-1zM366 89h1v1h-1zM366 111h1v1h-1zM366 133h1v1h-1zM366 154h1v1h-1zM366 176h1v1h-1zM366 198h1v1h-1zM366 220h1v1h-1zM366 241h1v1h-1zM366 263h1v1h-1zM366 285h1v1h-1zM366 306h1v1h-1zM366 328h1v1h-1zM366 350h1v1h-1zM366 372h1v1h-1zM366 393h1v1h-1zM366 415h1v1h-1zM366 437h1v1h-1zM366 458h1v1h-1zM366 480h1v1h-1zM366 502h1v1h-1zM366 524h1v1h-1zM366 545h1v1h-1zM366 567h1v1h-1zM366 589h1v1h-1zM366 610h1v1h-1zM366 632h1v1h-1zM366 654h1v1h-1zM366 676h1v1h-1zM366 697h1v1h-1zM366 719h1v1h-1zM366 741h1v1h-1zM366 762h1v1h-1zM366 784h1v1h-1zM366 806h1v1h-1zM366 828h1v1h-1zM387 2h1v1h-1zM387 24h1v1h-1zM387 46h1v1h-1zM387 68h1v1h-1zM387 89h1v1h-1zM387 111h1v1h-1zM387 133h1v1h-1zM387 154h1v1h-1zM387 176h1v1h-1zM387 198h1v1h-1zM387 220h1v1h-1zM387 241h1v1h-1zM387 263h1v1h-1zM387 285h1v1h-1zM387 306h1v1h-1zM387 328h1v1h-1zM387 350h1v1h-1zM387 372h1v1h-1zM387 393h1v1h-1zM387 415h1v1h-1zM387 437h1v1h-1zM387 458h1v1h-1zM387 480h1v1h-1zM387 502h1v1h-1zM387 524h1v1h-1zM387 545h1v1h-1zM387 567h1v1h-1zM387 589h1v1h-1zM387 610h1v1h-1zM387 632h1v1h-1zM387 654h1v1h-1zM387 676h1v1h-1zM387 697h1v1h-1zM387 719h1v1h-1zM387 741h1v1h-1zM387 762h1v1h-1zM387 784h1v1h-1zM387 806h1v1h-1zM387 828h1v1h-1zM409 2h1v1h-1zM409 24h1v1h-1zM409 46h1v1h-1zM409 68h1v1h-1zM409 89h1v1h-1zM409 111h1v1h-1zM409 133h1v1h-1zM409 154h1v1h-1zM409 176h1v1h-1zM409 198h1v1h-1zM409 220h1v1h-1zM409 241h1v1h-1zM409 263h1v1h-1zM409 285h1v1h-1zM409 306h1v1h-1zM409 328h1v1h-1zM409 350h1v1h-1zM409 372h1v1h-1zM409 393h1v1h-1zM409 415h1v1h-1zM409 437h1v1h-1zM409 458h1v1h-1zM409 480h1v1h-1zM409 502h1v1h-1zM409 524h1v1h-1zM409 545h1v1h-1zM409 567h1v1h-1zM409 589h1v1h-1zM409 610h1v1h-1zM409 632h1v1h-1zM409 654h1v1h-1zM409 676h1v1h-1zM409 697h1v1h-1zM409 719h1v1h-1zM409 741h1v1h-1zM409 762h1v1h-1zM409 784h1v1h-1zM409 806h1v1h-1zM409 828h1v1h-1zM431 2h1v1h-1zM431 24h1v1h-1zM431 46h1v1h-1zM431 68h1v1h-1zM431 89h1v1h-1zM431 111h1v1h-1zM431 133h1v1h-1zM431 154h1v1h-1zM431 176h1v1h-1zM431 198h1v1h-1zM431 220h1v1h-1zM431 241h1v1h-1zM431 263h1v1h-1zM431 285h1v1h-1zM431 306h1v1h-1zM431 328h1v1h-1zM431 350h1v1h-1zM431 372h1v1h-1zM431 393h1v1h-1zM431 415h1v1h-1zM431 437h1v1h-1zM431 458h1v1h-1zM431 480h1v1h-1zM431 502h1v1h-1zM431 524h1v1h-1zM431 545h1v1h-1zM431 567h1v1h-1zM431 589h1v1h-1zM431 610h1v1h-1zM431 632h1v1h-1zM431 654h1v1h-1zM431 676h1v1h-1zM431 697h1v1h-1zM431 719h1v1h-1zM431 741h1v1h-1zM431 762h1v1h-1zM431 784h1v1h-1zM431 806h1v1h-1zM431 828h1v1h-1zM452 2h1v1h-1zM452 24h1v1h-1zM452 46h1v1h-1zM452 68h1v1h-1zM452 89h1v1h-1zM452 111h1v1h-1zM452 133h1v1h-1zM452 154h1v1h-1zM452 176h1v1h-1zM452 198h1v1h-1zM452 220h1v1h-1zM452 241h1v1h-1zM452 263h1v1h-1zM452 285h1v1h-1zM452 306h1v1h-1zM452 328h1v1h-1zM452 350h1v1h-1zM452 372h1v1h-1zM452 393h1v1h-1zM452 415h1v1h-1zM452 437h1v1h-1zM452 458h1v1h-1zM452 480h1v1h-1zM452 502h1v1h-1zM452 524h1v1h-1zM452 545h1v1h-1zM452 567h1v1h-1zM452 589h1v1h-1zM452 610h1v1h-1zM452 632h1v1h-1zM452 654h1v1h-1zM452 676h1v1h-1zM452 697h1v1h-1zM452 719h1v1h-1zM452 741h1v1h-1zM452 762h1v1h-1zM452 784h1v1h-1zM452 806h1v1h-1zM452 828h1v1h-1zM474 2h1v1h-1zM474 24h1v1h-1zM474 46h1v1h-1zM474 68h1v1h-1zM474 89h1v1h-1zM474 111h1v1h-1zM474 133h1v1h-1zM474 154h1v1h-1zM474 176h1v1h-1zM474 198h1v1h-1zM474 220h1v1h-1zM474 241h1v1h-1zM474 263h1v1h-1zM474 285h1v1h-1zM474 306h1v1h-1zM474 328h1v1h-1zM474 350h1v1h-1zM474 372h1v1h-1zM474 393h1v1h-1zM474 415h1v1h-1zM474 437h1v1h-1zM474 458h1v1h-1zM474 480h1v1h-1zM474 502h1v1h-1zM474 524h1v1h-1zM474 545h1v1h-1zM474 567h1v1h-1zM474 589h1v1h-1zM474 610h1v1h-1zM474 632h1v1h-1zM474 654h1v1h-1zM474 676h1v1h-1zM474 697h1v1h-1zM474 719h1v1h-1zM474 741h1v1h-1zM474 762h1v1h-1zM474 784h1v1h-1zM474 806h1v1h-1zM474 828h1v1h-1zM496 2h1v1h-1zM496 24h1v1h-1zM496 46h1v1h-1zM496 68h1v1h-1zM496 89h1v1h-1zM496 111h1v1h-1zM496 133h1v1h-1zM496 154h1v1h-1zM496 176h1v1h-1zM496 198h1v1h-1zM496 220h1v1h-1zM496 241h1v1h-1zM496 263h1v1h-1zM496 285h1v1h-1zM496 306h1v1h-1zM496 328h1v1h-1zM496 350h1v1h-1zM496 372h1v1h-1zM496 393h1v1h-1zM496 415h1v1h-1zM496 437h1v1h-1zM496 458h1v1h-1zM496 480h1v1h-1zM496 502h1v1h-1zM496 524h1v1h-1zM496 545h1v1h-1zM496 567h1v1h-1zM496 589h1v1h-1zM496 610h1v1h-1zM496 632h1v1h-1zM496 654h1v1h-1zM496 676h1v1h-1zM496 697h1v1h-1zM496 719h1v1h-1zM496 741h1v1h-1zM496 762h1v1h-1zM496 784h1v1h-1zM496 806h1v1h-1zM496 828h1v1h-1zM518 2h1v1h-1zM518 24h1v1h-1zM518 46h1v1h-1zM518 68h1v1h-1zM518 89h1v1h-1zM518 111h1v1h-1zM518 133h1v1h-1zM518 154h1v1h-1zM518 176h1v1h-1zM518 198h1v1h-1zM518 220h1v1h-1zM518 241h1v1h-1zM518 263h1v1h-1zM518 285h1v1h-1zM518 306h1v1h-1zM518 328h1v1h-1zM518 350h1v1h-1zM518 372h1v1h-1zM518 393h1v1h-1zM518 415h1v1h-1zM518 437h1v1h-1zM518 458h1v1h-1zM518 480h1v1h-1zM518 502h1v1h-1zM518 524h1v1h-1zM518 545h1v1h-1zM518 567h1v1h-1zM518 589h1v1h-1zM518 610h1v1h-1zM518 632h1v1h-1zM518 654h1v1h-1zM518 676h1v1h-1zM518 697h1v1h-1zM518 719h1v1h-1zM518 741h1v1h-1zM518 762h1v1h-1zM518 784h1v1h-1zM518 806h1v1h-1zM518 828h1v1h-1zM539 2h1v1h-1zM539 24h1v1h-1zM539 46h1v1h-1zM539 68h1v1h-1zM539 89h1v1h-1zM539 111h1v1h-1zM539 133h1v1h-1zM539 154h1v1h-1zM539 176h1v1h-1zM539 198h1v1h-1zM539 220h1v1h-1zM539 241h1v1h-1zM539 263h1v1h-1zM539 285h1v1h-1zM539 306h1v1h-1zM539 328h1v1h-1zM539 350h1v1h-1zM539 372h1v1h-1zM539 393h1v1h-1zM539 415h1v1h-1zM539 437h1v1h-1zM539 458h1v1h-1zM539 480h1v1h-1zM539 502h1v1h-1zM539 524h1v1h-1zM539 545h1v1h-1zM539 567h1v1h-1zM539 589h1v1h-1zM539 610h1v1h-1zM539 632h1v1h-1zM539 654h1v1h-1zM539 676h1v1h-1zM539 697h1v1h-1zM539 719h1v1h-1zM539 741h1v1h-1zM539 762h1v1h-1zM539 784h1v1h-1zM539 806h1v1h-1zM539 828h1v1h-1zM561 2h1v1h-1zM561 24h1v1h-1zM561 46h1v1h-1zM561 68h1v1h-1zM561 89h1v1h-1zM561 111h1v1h-1zM561 133h1v1h-1zM561 154h1v1h-1zM561 176h1v1h-1zM561 198h1v1h-1zM561 220h1v1h-1zM561 241h1v1h-1zM561 263h1v1h-1zM561 285h1v1h-1zM561 306h1v1h-1zM561 328h1v1h-1zM561 350h1v1h-1zM561 372h1v1h-1zM561 393h1v1h-1zM561 415h1v1h-1zM561 437h1v1h-1zM561 458h1v1h-1zM561 480h1v1h-1zM561 502h1v1h-1zM561 524h1v1h-1zM561 545h1v1h-1zM561 567h1v1h-1zM561 589h1v1h-1zM561 610h1v1h-1zM561 632h1v1h-1zM561 654h1v1h-1zM561 676h1v1h-1zM561 697h1v1h-1zM561 719h1v1h-1zM561 741h1v1h-1zM561 762h1v1h-1zM561 784h1v1h-1zM561 806h1v1h-1zM561 828h1v1h-1zM583 2h1v1h-1zM583 24h1v1h-1zM583 46h1v1h-1zM583 68h1v1h-1zM583 89h1v1h-1zM583 111h1v1h-1zM583 133h1v1h-1zM583 154h1v1h-1zM583 176h1v1h-1zM583 198h1v1h-1zM583 220h1v1h-1zM583 241h1v1h-1zM583 263h1v1h-1zM583 285h1v1h-1zM583 306h1v1h-1zM583 328h1v1h-1zM583 350h1v1h-1zM583 372h1v1h-1zM583 393h1v1h-1zM583 415h1v1h-1zM583 437h1v1h-1zM583 458h1v1h-1zM583 480h1v1h-1zM583 502h1v1h-1zM583 524h1v1h-1zM583 545h1v1h-1zM583 567h1v1h-1zM583 589h1v1h-1zM583 610h1v1h-1zM583 632h1v1h-1zM583 654h1v1h-1zM583 676h1v1h-1zM583 697h1v1h-1zM583 719h1v1h-1zM583 741h1v1h-1zM583 762h1v1h-1zM583 784h1v1h-1zM583 806h1v1h-1zM583 828h1v1h-1zM604 2h1v1h-1zM604 24h1v1h-1zM604 46h1v1h-1zM604 68h1v1h-1zM604 89h1v1h-1zM604 111h1v1h-1zM604 133h1v1h-1zM604 154h1v1h-1zM604 176h1v1h-1zM604 198h1v1h-1zM604 220h1v1h-1zM604 241h1v1h-1zM604 263h1v1h-1zM604 285h1v1h-1zM604 306h1v1h-1zM604 328h1v1h-1zM604 350h1v1h-1zM604 372h1v1h-1zM604 393h1v1h-1zM604 415h1v1h-1zM604 437h1v1h-1zM604 458h1v1h-1zM604 480h1v1h-1zM604 502h1v1h-1zM604 524h1v1h-1zM604 545h1v1h-1zM604 567h1v1h-1zM604 589h1v1h-1zM604 610h1v1h-1zM604 632h1v1h-1zM604 654h1v1h-1zM604 676h1v1h-1zM604 697h1v1h-1zM604 719h1v1h-1zM604 741h1v1h-1zM604 762h1v1h-1zM604 784h1v1h-1zM604 806h1v1h-1zM604 828h1v1h-1zM626 2h1v1h-1zM626 24h1v1h-1zM626 46h1v1h-1zM626 68h1v1h-1zM626 89h1v1h-1zM626 111h1v1h-1zM626 133h1v1h-1zM626 154h1v1h-1zM626 176h1v1h-1zM626 198h1v1h-1zM626 220h1v1h-1zM626 241h1v1h-1zM626 263h1v1h-1zM626 285h1v1h-1zM626 306h1v1h-1zM626 328h1v1h-1zM626 350h1v1h-1zM626 372h1v1h-1zM626 393h1v1h-1zM626 415h1v1h-1zM626 437h1v1h-1zM626 458h1v1h-1zM626 480h1v1h-1zM626 502h1v1h-1zM626 524h1v1h-1zM626 545h1v1h-1zM626 567h1v1h-1zM626 589h1v1h-1zM626 610h1v1h-1zM626 632h1v1h-1zM626 654h1v1h-1zM626 676h1v1h-1zM626 697h1v1h-1zM626 719h1v1h-1zM626 741h1v1h-1zM626 762h1v1h-1zM626 784h1v1h-1zM626 806h1v1h-1zM626 828h1v1h-1zM648 2h1v1h-1zM648 24h1v1h-1zM648 46h1v1h-1zM648 68h1v1h-1zM648 89h1v1h-1zM648 111h1v1h-1zM648 133h1v1h-1zM648 154h1v1h-1zM648 176h1v1h-1zM648 198h1v1h-1zM648 220h1v1h-1zM648 241h1v1h-1zM648 263h1v1h-1zM648 285h1v1h-1zM648 306h1v1h-1zM648 328h1v1h-1zM648 350h1v1h-1zM648 372h1v1h-1zM648 393h1v1h-1zM648 415h1v1h-1zM648 437h1v1h-1zM648 458h1v1h-1zM648 480h1v1h-1zM648 502h1v1h-1zM648 524h1v1h-1zM648 545h1v1h-1zM648 567h1v1h-1zM648 589h1v1h-1zM648 610h1v1h-1zM648 632h1v1h-1zM648 654h1v1h-1zM648 676h1v1h-1zM648 697h1v1h-1zM648 719h1v1h-1zM648 741h1v1h-1zM648 762h1v1h-1zM648 784h1v1h-1zM648 806h1v1h-1zM648 828h1v1h-1zM670 2h1v1h-1zM670 24h1v1h-1zM670 46h1v1h-1zM670 68h1v1h-1zM670 89h1v1h-1zM670 111h1v1h-1zM670 133h1v1h-1zM670 154h1v1h-1zM670 176h1v1h-1zM670 198h1v1h-1zM670 220h1v1h-1zM670 241h1v1h-1zM670 263h1v1h-1zM670 285h1v1h-1zM670 306h1v1h-1zM670 328h1v1h-1zM670 350h1v1h-1zM670 372h1v1h-1zM670 393h1v1h-1zM670 415h1v1h-1zM670 437h1v1h-1zM670 458h1v1h-1zM670 480h1v1h-1zM670 502h1v1h-1zM670 524h1v1h-1zM670 545h1v1h-1zM670 567h1v1h-1zM670 589h1v1h-1zM670 610h1v1h-1zM670 632h1v1h-1zM670 654h1v1h-1zM670 676h1v1h-1zM670 697h1v1h-1zM670 719h1v1h-1zM670 741h1v1h-1zM670 762h1v1h-1zM670 784h1v1h-1zM670 806h1v1h-1zM670 828h1v1h-1zM691 2h1v1h-1zM691 24h1v1h-1zM691 46h1v1h-1zM691 68h1v1h-1zM691 89h1v1h-1zM691 111h1v1h-1zM691 133h1v1h-1zM691 154h1v1h-1zM691 176h1v1h-1zM691 198h1v1h-1zM691 220h1v1h-1zM691 241h1v1h-1zM691 263h1v1h-1zM691 285h1v1h-1zM691 306h1v1h-1zM691 328h1v1h-1zM691 350h1v1h-1zM691 372h1v1h-1zM691 393h1v1h-1zM691 415h1v1h-1zM691 437h1v1h-1zM691 458h1v1h-1zM691 480h1v1h-1zM691 502h1v1h-1zM691 524h1v1h-1zM691 545h1v1h-1zM691 567h1v1h-1zM691 589h1v1h-1zM691 610h1v1h-1zM691 632h1v1h-1zM691 654h1v1h-1zM691 676h1v1h-1zM691 697h1v1h-1zM691 719h1v1h-1zM691 741h1v1h-1zM691 762h1v1h-1zM691 784h1v1h-1zM691 806h1v1h-1zM691 828h1v1h-1zM713 2h1v1h-1zM713 24h1v1h-1zM713 46h1v1h-1zM713 68h1v1h-1zM713 89h1v1h-1zM713 111h1v1h-1zM713 133h1v1h-1zM713 154h1v1h-1zM713 176h1v1h-1zM713 198h1v1h-1zM713 220h1v1h-1zM713 241h1v1h-1zM713 263h1v1h-1zM713 285h1v1h-1zM713 306h1v1h-1zM713 328h1v1h-1zM713 350h1v1h-1zM713 372h1v1h-1zM713 393h1v1h-1zM713 415h1v1h-1zM713 437h1v1h-1zM713 458h1v1h-1zM713 480h1v1h-1zM713 502h1v1h-1zM713 524h1v1h-1zM713 545h1v1h-1zM713 567h1v1h-1zM713 589h1v1h-1zM713 610h1v1h-1zM713 632h1v1h-1zM713 654h1v1h-1zM713 676h1v1h-1zM713 697h1v1h-1zM713 719h1v1h-1zM713 741h1v1h-1zM713 762h1v1h-1zM713 784h1v1h-1zM713 806h1v1h-1zM713 828h1v1h-1zM735 2h1v1h-1zM735 24h1v1h-1zM735 46h1v1h-1zM735 68h1v1h-1zM735 89h1v1h-1zM735 111h1v1h-1zM735 133h1v1h-1zM735 154h1v1h-1zM735 176h1v1h-1zM735 198h1v1h-1zM735 220h1v1h-1zM735 241h1v1h-1zM735 263h1v1h-1zM735 285h1v1h-1zM735 306h1v1h-1zM735 328h1v1h-1zM735 350h1v1h-1zM735 372h1v1h-1zM735 393h1v1h-1zM735 415h1v1h-1zM735 437h1v1h-1zM735 458h1v1h-1zM735 480h1v1h-1zM735 502h1v1h-1zM735 524h1v1h-1zM735 545h1v1h-1zM735 567h1v1h-1zM735 589h1v1h-1zM735 610h1v1h-1zM735 632h1v1h-1zM735 654h1v1h-1zM735 676h1v1h-1zM735 697h1v1h-1zM735 719h1v1h-1zM735 741h1v1h-1zM735 762h1v1h-1zM735 784h1v1h-1zM735 806h1v1h-1zM735 828h1v1h-1zM756 2h1v1h-1zM756 24h1v1h-1zM756 46h1v1h-1zM756 68h1v1h-1zM756 89h1v1h-1zM756 111h1v1h-1zM756 133h1v1h-1zM756 154h1v1h-1zM756 176h1v1h-1zM756 198h1v1h-1zM756 220h1v1h-1zM756 241h1v1h-1zM756 263h1v1h-1zM756 285h1v1h-1zM756 306h1v1h-1zM756 328h1v1h-1zM756 350h1v1h-1zM756 372h1v1h-1zM756 393h1v1h-1zM756 415h1v1h-1zM756 437h1v1h-1zM756 458h1v1h-1zM756 480h1v1h-1zM756 502h1v1h-1zM756 524h1v1h-1zM756 545h1v1h-1zM756 567h1v1h-1zM756 589h1v1h-1zM756 610h1v1h-1zM756 632h1v1h-1zM756 654h1v1h-1zM756 676h1v1h-1zM756 697h1v1h-1zM756 719h1v1h-1zM756 741h1v1h-1zM756 762h1v1h-1zM756 784h1v1h-1zM756 806h1v1h-1zM756 828h1v1h-1zM778 2h1v1h-1zM778 24h1v1h-1zM778 46h1v1h-1zM778 68h1v1h-1zM778 89h1v1h-1zM778 111h1v1h-1zM778 133h1v1h-1zM778 154h1v1h-1zM778 176h1v1h-1zM778 198h1v1h-1zM778 220h1v1h-1zM778 241h1v1h-1zM778 263h1v1h-1zM778 285h1v1h-1zM778 306h1v1h-1zM778 328h1v1h-1zM778 350h1v1h-1zM778 372h1v1h-1zM778 393h1v1h-1zM778 415h1v1h-1zM778 437h1v1h-1zM778 458h1v1h-1zM778 480h1v1h-1zM778 502h1v1h-1zM778 524h1v1h-1zM778 545h1v1h-1zM778 567h1v1h-1zM778 589h1v1h-1zM778 610h1v1h-1zM778 632h1v1h-1zM778 654h1v1h-1zM778 676h1v1h-1zM778 697h1v1h-1zM778 719h1v1h-1zM778 741h1v1h-1zM778 762h1v1h-1zM778 784h1v1h-1zM778 806h1v1h-1zM778 828h1v1h-1zM800 2h1v1h-1zM800 24h1v1h-1zM800 46h1v1h-1zM800 68h1v1h-1zM800 89h1v1h-1zM800 111h1v1h-1zM800 133h1v1h-1zM800 154h1v1h-1zM800 176h1v1h-1zM800 198h1v1h-1zM800 220h1v1h-1zM800 241h1v1h-1zM800 263h1v1h-1zM800 285h1v1h-1zM800 306h1v1h-1zM800 328h1v1h-1zM800 350h1v1h-1zM800 372h1v1h-1zM800 393h1v1h-1zM800 415h1v1h-1zM800 437h1v1h-1zM800 458h1v1h-1zM800 480h1v1h-1zM800 502h1v1h-1zM800 524h1v1h-1zM800 545h1v1h-1zM800 567h1v1h-1zM800 589h1v1h-1zM800 610h1v1h-1zM800 632h1v1h-1zM800 654h1v1h-1zM800 676h1v1h-1zM800 697h1v1h-1zM800 719h1v1h-1zM800 741h1v1h-1zM800 762h1v1h-1zM800 784h1v1h-1zM800 806h1v1h-1zM800 828h1v1h-1zM822 2h1v1h-1zM822 24h1v1h-1zM822 46h1v1h-1zM822 68h1v1h-1zM822 89h1v1h-1zM822 111h1v1h-1zM822 133h1v1h-1zM822 154h1v1h-1zM822 176h1v1h-1zM822 198h1v1h-1zM822 220h1v1h-1zM822 241h1v1h-1zM822 263h1v1h-1zM822 285h1v1h-1zM822 306h1v1h-1zM822 328h1v1h-1zM822 350h1v1h-1zM822 372h1v1h-1zM822 393h1v1h-1zM822 415h1v1h-1zM822 437h1v1h-1zM822 458h1v1h-1zM822 480h1v1h-1zM822 502h1v1h-1zM822 524h1v1h-1zM822 545h1v1h-1zM822 567h1v1h-1zM822 589h1v1h-1zM822 610h1v1h-1zM822 632h1v1h-1zM822 654h1v1h-1zM822 676h1v1h-1zM822 697h1v1h-1zM822 719h1v1h-1zM822 741h1v1h-1zM822 762h1v1h-1zM822 784h1v1h-1zM822 806h1v1h-1zM822 828h1v1h-1zM843 2h1v1h-1zM843 24h1v1h-1zM843 46h1v1h-1zM843 68h1v1h-1zM843 89h1v1h-1zM843 111h1v1h-1zM843 133h1v1h-1zM843 154h1v1h-1zM843 176h1v1h-1zM843 198h1v1h-1zM843 220h1v1h-1zM843 241h1v1h-1zM843 263h1v1h-1zM843 285h1v1h-1zM843 306h1v1h-1zM843 328h1v1h-1zM843 350h1v1h-1zM843 372h1v1h-1zM843 393h1v1h-1zM843 415h1v1h-1zM843 437h1v1h-1zM843 458h1v1h-1zM843 480h1v1h-1zM843 502h1v1h-1zM843 524h1v1h-1zM843 545h1v1h-1zM843 567h1v1h-1zM843 589h1v1h-1zM843 610h1v1h-1zM843 632h1v1h-1zM843 654h1v1h-1zM843 676h1v1h-1zM843 697h1v1h-1zM843 719h1v1h-1zM843 741h1v1h-1zM843 762h1v1h-1zM843 784h1v1h-1zM843 806h1v1h-1zM843 828h1v1h-1zM865 2h1v1h-1zM865 24h1v1h-1zM865 46h1v1h-1zM865 68h1v1h-1zM865 89h1v1h-1zM865 111h1v1h-1zM865 133h1v1h-1zM865 154h1v1h-1zM865 176h1v1h-1zM865 198h1v1h-1zM865 220h1v1h-1zM865 241h1v1h-1zM865 263h1v1h-1zM865 285h1v1h-1zM865 306h1v1h-1zM865 328h1v1h-1zM865 350h1v1h-1zM865 372h1v1h-1zM865 393h1v1h-1zM865 415h1v1h-1zM865 437h1v1h-1zM865 458h1v1h-1zM865 480h1v1h-1zM865 502h1v1h-1zM865 524h1v1h-1zM865 545h1v1h-1zM865 567h1v1h-1zM865 589h1v1h-1zM865 610h1v1h-1zM865 632h1v1h-1zM865 654h1v1h-1zM865 676h1v1h-1zM865 697h1v1h-1zM865 719h1v1h-1zM865 741h1v1h-1zM865 762h1v1h-1zM865 784h1v1h-1zM865 806h1v1h-1zM865 828h1v1h-1zM887 2h1v1h-1zM887 24h1v1h-1zM887 46h1v1h-1zM887 68h1v1h-1zM887 89h1v1h-1zM887 111h1v1h-1zM887 133h1v1h-1zM887 154h1v1h-1zM887 176h1v1h-1zM887 198h1v1h-1zM887 220h1v1h-1zM887 241h1v1h-1zM887 263h1v1h-1zM887 285h1v1h-1zM887 306h1v1h-1zM887 328h1v1h-1zM887 350h1v1h-1zM887 372h1v1h-1zM887 393h1v1h-1zM887 415h1v1h-1zM887 437h1v1h-1zM887 458h1v1h-1zM887 480h1v1h-1zM887 502h1v1h-1zM887 524h1v1h-1zM887 545h1v1h-1zM887 567h1v1h-1zM887 589h1v1h-1zM887 610h1v1h-1zM887 632h1v1h-1zM887 654h1v1h-1zM887 676h1v1h-1zM887 697h1v1h-1zM887 719h1v1h-1zM887 741h1v1h-1zM887 762h1v1h-1zM887 784h1v1h-1zM887 806h1v1h-1zM887 828h1v1h-1zM908 2h1v1h-1zM908 24h1v1h-1zM908 46h1v1h-1zM908 68h1v1h-1zM908 89h1v1h-1zM908 111h1v1h-1zM908 133h1v1h-1zM908 154h1v1h-1zM908 176h1v1h-1zM908 198h1v1h-1zM908 220h1v1h-1zM908 241h1v1h-1zM908 263h1v1h-1zM908 285h1v1h-1zM908 306h1v1h-1zM908 328h1v1h-1zM908 350h1v1h-1zM908 372h1v1h-1zM908 393h1v1h-1zM908 415h1v1h-1zM908 437h1v1h-1zM908 458h1v1h-1zM908 480h1v1h-1zM908 502h1v1h-1zM908 524h1v1h-1zM908 545h1v1h-1zM908 567h1v1h-1zM908 589h1v1h-1zM908 610h1v1h-1zM908 632h1v1h-1zM908 654h1v1h-1zM908 676h1v1h-1zM908 697h1v1h-1zM908 719h1v1h-1zM908 741h1v1h-1zM908 762h1v1h-1zM908 784h1v1h-1zM908 806h1v1h-1zM908 828h1v1h-1zM930 2h1v1h-1zM930 24h1v1h-1zM930 46h1v1h-1zM930 68h1v1h-1zM930 89h1v1h-1zM930 111h1v1h-1zM930 133h1v1h-1zM930 154h1v1h-1zM930 176h1v1h-1zM930 198h1v1h-1zM930 220h1v1h-1zM930 241h1v1h-1zM930 263h1v1h-1zM930 285h1v1h-1zM930 306h1v1h-1zM930 328h1v1h-1zM930 350h1v1h-1zM930 372h1v1h-1zM930 393h1v1h-1zM930 415h1v1h-1zM930 437h1v1h-1zM930 458h1v1h-1zM930 480h1v1h-1zM930 502h1v1h-1zM930 524h1v1h-1zM930 545h1v1h-1zM930 567h1v1h-1zM930 589h1v1h-1zM930 610h1v1h-1zM930 632h1v1h-1zM930 654h1v1h-1zM930 676h1v1h-1zM930 697h1v1h-1zM930 719h1v1h-1zM930 741h1v1h-1zM930 762h1v1h-1zM930 784h1v1h-1zM930 806h1v1h-1zM930 828h1v1h-1zM952 2h1v1h-1zM952 24h1v1h-1zM952 46h1v1h-1zM952 68h1v1h-1zM952 89h1v1h-1zM952 111h1v1h-1zM952 133h1v1h-1zM952 154h1v1h-1zM952 176h1v1h-1zM952 198h1v1h-1zM952 220h1v1h-1zM952 241h1v1h-1zM952 263h1v1h-1zM952 285h1v1h-1zM952 306h1v1h-1zM952 328h1v1h-1zM952 350h1v1h-1zM952 372h1v1h-1zM952 393h1v1h-1zM952 415h1v1h-1zM952 437h1v1h-1zM952 458h1v1h-1zM952 480h1v1h-1zM952 502h1v1h-1zM952 524h1v1h-1zM952 545h1v1h-1zM952 567h1v1h-1zM952 589h1v1h-1zM952 610h1v1h-1zM952 632h1v1h-1zM952 654h1v1h-1zM952 676h1v1h-1zM952 697h1v1h-1zM952 719h1v1h-1zM952 741h1v1h-1zM952 762h1v1h-1zM952 784h1v1h-1zM952 806h1v1h-1zM952 828h1v1h-1zM974 2h1v1h-1zM974 24h1v1h-1zM974 46h1v1h-1zM974 68h1v1h-1zM974 89h1v1h-1zM974 111h1v1h-1zM974 133h1v1h-1zM974 154h1v1h-1zM974 176h1v1h-1zM974 198h1v1h-1zM974 220h1v1h-1zM974 241h1v1h-1zM974 263h1v1h-1zM974 285h1v1h-1zM974 306h1v1h-1zM974 328h1v1h-1zM974 350h1v1h-1zM974 372h1v1h-1zM974 393h1v1h-1zM974 415h1v1h-1zM974 437h1v1h-1zM974 458h1v1h-1zM974 480h1v1h-1zM974 502h1v1h-1zM974 524h1v1h-1zM974 545h1v1h-1zM974 567h1v1h-1zM974 589h1v1h-1zM974 610h1v1h-1zM974 632h1v1h-1zM974 654h1v1h-1zM974 676h1v1h-1zM974 697h1v1h-1zM974 719h1v1h-1zM974 741h1v1h-1zM974 762h1v1h-1zM974 784h1v1h-1zM974 806h1v1h-1zM974 828h1v1h-1zM995 2h1v1h-1zM995 24h1v1h-1zM995 46h1v1h-1zM995 68h1v1h-1zM995 89h1v1h-1zM995 111h1v1h-1zM995 133h1v1h-1zM995 154h1v1h-1zM995 176h1v1h-1zM995 198h1v1h-1zM995 220h1v1h-1zM995 241h1v1h-1zM995 263h1v1h-1zM995 285h1v1h-1zM995 306h1v1h-1zM995 328h1v1h-1zM995 350h1v1h-1zM995 372h1v1h-1zM995 393h1v1h-1zM995 415h1v1h-1zM995 437h1v1h-1zM995 458h1v1h-1zM995 480h1v1h-1zM995 502h1v1h-1zM995 524h1v1h-1zM995 545h1v1h-1zM995 567h1v1h-1zM995 589h1v1h-1zM995 610h1v1h-1zM995 632h1v1h-1zM995 654h1v1h-1zM995 676h1v1h-1zM995 697h1v1h-1zM995 719h1v1h-1zM995 741h1v1h-1zM995 762h1v1h-1zM995 784h1v1h-1zM995 806h1v1h-1zM995 828h1v1h-1zM1017 2h1v1h-1zM1017 24h1v1h-1zM1017 46h1v1h-1zM1017 68h1v1h-1zM1017 89h1v1h-1zM1017 111h1v1h-1zM1017 133h1v1h-1zM1017 154h1v1h-1zM1017 176h1v1h-1zM1017 198h1v1h-1zM1017 220h1v1h-1zM1017 241h1v1h-1zM1017 263h1v1h-1zM1017 285h1v1h-1zM1017 306h1v1h-1zM1017 328h1v1h-1zM1017 350h1v1h-1zM1017 372h1v1h-1zM1017 393h1v1h-1zM1017 415h1v1h-1zM1017 437h1v1h-1zM1017 458h1v1h-1zM1017 480h1v1h-1zM1017 502h1v1h-1zM1017 524h1v1h-1zM1017 545h1v1h-1zM1017 567h1v1h-1zM1017 589h1v1h-1zM1017 610h1v1h-1zM1017 632h1v1h-1zM1017 654h1v1h-1zM1017 676h1v1h-1zM1017 697h1v1h-1zM1017 719h1v1h-1zM1017 741h1v1h-1zM1017 762h1v1h-1zM1017 784h1v1h-1zM1017 806h1v1h-1zM1017 828h1v1h-1zM1039 2h1v1h-1zM1039 24h1v1h-1zM1039 46h1v1h-1zM1039 68h1v1h-1zM1039 89h1v1h-1zM1039 111h1v1h-1zM1039 133h1v1h-1zM1039 154h1v1h-1zM1039 176h1v1h-1zM1039 198h1v1h-1zM1039 220h1v1h-1zM1039 241h1v1h-1zM1039 263h1v1h-1zM1039 285h1v1h-1zM1039 306h1v1h-1zM1039 328h1v1h-1zM1039 350h1v1h-1zM1039 372h1v1h-1zM1039 393h1v1h-1zM1039 415h1v1h-1zM1039 437h1v1h-1zM1039 458h1v1h-1zM1039 480h1v1h-1zM1039 502h1v1h-1zM1039 524h1v1h-1zM1039 545h1v1h-1zM1039 567h1v1h-1zM1039 589h1v1h-1zM1039 610h1v1h-1zM1039 632h1v1h-1zM1039 654h1v1h-1zM1039 676h1v1h-1zM1039 697h1v1h-1zM1039 719h1v1h-1zM1039 741h1v1h-1zM1039 762h1v1h-1zM1039 784h1v1h-1zM1039 806h1v1h-1zM1039 828h1v1h-1zM1060 2h1v1h-1zM1060 24h1v1h-1zM1060 46h1v1h-1zM1060 68h1v1h-1zM1060 89h1v1h-1zM1060 111h1v1h-1zM1060 133h1v1h-1zM1060 154h1v1h-1zM1060 176h1v1h-1zM1060 198h1v1h-1zM1060 220h1v1h-1zM1060 241h1v1h-1zM1060 263h1v1h-1zM1060 285h1v1h-1zM1060 306h1v1h-1zM1060 328h1v1h-1zM1060 350h1v1h-1zM1060 372h1v1h-1zM1060 393h1v1h-1zM1060 415h1v1h-1zM1060 437h1v1h-1zM1060 458h1v1h-1zM1060 480h1v1h-1zM1060 502h1v1h-1zM1060 524h1v1h-1zM1060 545h1v1h-1zM1060 567h1v1h-1zM1060 589h1v1h-1zM1060 610h1v1h-1zM1060 632h1v1h-1zM1060 654h1v1h-1zM1060 676h1v1h-1zM1060 697h1v1h-1zM1060 719h1v1h-1zM1060 741h1v1h-1zM1060 762h1v1h-1zM1060 784h1v1h-1zM1060 806h1v1h-1zM1060 828h1v1h-1zM1082 2h1v1h-1zM1082 24h1v1h-1zM1082 46h1v1h-1zM1082 68h1v1h-1zM1082 89h1v1h-1zM1082 111h1v1h-1zM1082 133h1v1h-1zM1082 154h1v1h-1zM1082 176h1v1h-1zM1082 198h1v1h-1zM1082 220h1v1h-1zM1082 241h1v1h-1zM1082 263h1v1h-1zM1082 285h1v1h-1zM1082 306h1v1h-1zM1082 328h1v1h-1zM1082 350h1v1h-1zM1082 372h1v1h-1zM1082 393h1v1h-1zM1082 415h1v1h-1zM1082 437h1v1h-1zM1082 458h1v1h-1zM1082 480h1v1h-1zM1082 502h1v1h-1zM1082 524h1v1h-1zM1082 545h1v1h-1zM1082 567h1v1h-1zM1082 589h1v1h-1zM1082 610h1v1h-1zM1082 632h1v1h-1zM1082 654h1v1h-1zM1082 676h1v1h-1zM1082 697h1v1h-1zM1082 719h1v1h-1zM1082 741h1v1h-1zM1082 762h1v1h-1zM1082 784h1v1h-1zM1082 806h1v1h-1zM1082 828h1v1h-1zM1104 2h1v1h-1zM1104 24h1v1h-1zM1104 46h1v1h-1zM1104 68h1v1h-1zM1104 89h1v1h-1zM1104 111h1v1h-1zM1104 133h1v1h-1zM1104 154h1v1h-1zM1104 176h1v1h-1zM1104 198h1v1h-1zM1104 220h1v1h-1zM1104 241h1v1h-1zM1104 263h1v1h-1zM1104 285h1v1h-1zM1104 306h1v1h-1zM1104 328h1v1h-1zM1104 350h1v1h-1zM1104 372h1v1h-1zM1104 393h1v1h-1zM1104 415h1v1h-1zM1104 437h1v1h-1zM1104 458h1v1h-1zM1104 480h1v1h-1zM1104 502h1v1h-1zM1104 524h1v1h-1zM1104 545h1v1h-1zM1104 567h1v1h-1zM1104 589h1v1h-1zM1104 610h1v1h-1zM1104 632h1v1h-1zM1104 654h1v1h-1zM1104 676h1v1h-1zM1104 697h1v1h-1zM1104 719h1v1h-1zM1104 741h1v1h-1zM1104 762h1v1h-1zM1104 784h1v1h-1zM1104 806h1v1h-1zM1104 828h1v1h-1zM1126 2h1v1h-1zM1126 24h1v1h-1zM1126 46h1v1h-1zM1126 68h1v1h-1zM1126 89h1v1h-1zM1126 111h1v1h-1zM1126 133h1v1h-1zM1126 154h1v1h-1zM1126 176h1v1h-1zM1126 198h1v1h-1zM1126 220h1v1h-1zM1126 241h1v1h-1zM1126 263h1v1h-1zM1126 285h1v1h-1zM1126 306h1v1h-1zM1126 328h1v1h-1zM1126 350h1v1h-1zM1126 372h1v1h-1zM1126 393h1v1h-1zM1126 415h1v1h-1zM1126 437h1v1h-1zM1126 458h1v1h-1zM1126 480h1v1h-1zM1126 502h1v1h-1zM1126 524h1v1h-1zM1126 545h1v1h-1zM1126 567h1v1h-1zM1126 589h1v1h-1zM1126 610h1v1h-1zM1126 632h1v1h-1zM1126 654h1v1h-1zM1126 676h1v1h-1zM1126 697h1v1h-1zM1126 719h1v1h-1zM1126 741h1v1h-1zM1126 762h1v1h-1zM1126 784h1v1h-1zM1126 806h1v1h-1zM1126 828h1v1h-1zM1147 2h1v1h-1zM1147 24h1v1h-1zM1147 46h1v1h-1zM1147 68h1v1h-1zM1147 89h1v1h-1zM1147 111h1v1h-1zM1147 133h1v1h-1zM1147 154h1v1h-1zM1147 176h1v1h-1zM1147 198h1v1h-1zM1147 220h1v1h-1zM1147 241h1v1h-1zM1147 263h1v1h-1zM1147 285h1v1h-1zM1147 306h1v1h-1zM1147 328h1v1h-1zM1147 350h1v1h-1zM1147 372h1v1h-1zM1147 393h1v1h-1zM1147 415h1v1h-1zM1147 437h1v1h-1zM1147 458h1v1h-1zM1147 480h1v1h-1zM1147 502h1v1h-1zM1147 524h1v1h-1zM1147 545h1v1h-1zM1147 567h1v1h-1zM1147 589h1v1h-1zM1147 610h1v1h-1zM1147 632h1v1h-1zM1147 654h1v1h-1zM1147 676h1v1h-1zM1147 697h1v1h-1zM1147 719h1v1h-1zM1147 741h1v1h-1zM1147 762h1v1h-1zM1147 784h1v1h-1zM1147 806h1v1h-1zM1147 828h1v1h-1zM1169 2h1v1h-1zM1169 24h1v1h-1zM1169 46h1v1h-1zM1169 68h1v1h-1zM1169 89h1v1h-1zM1169 111h1v1h-1zM1169 133h1v1h-1zM1169 154h1v1h-1zM1169 176h1v1h-1zM1169 198h1v1h-1zM1169 220h1v1h-1zM1169 241h1v1h-1zM1169 263h1v1h-1zM1169 285h1v1h-1zM1169 306h1v1h-1zM1169 328h1v1h-1zM1169 350h1v1h-1zM1169 372h1v1h-1zM1169 393h1v1h-1zM1169 415h1v1h-1zM1169 437h1v1h-1zM1169 458h1v1h-1zM1169 480h1v1h-1zM1169 502h1v1h-1zM1169 524h1v1h-1zM1169 545h1v1h-1zM1169 567h1v1h-1zM1169 589h1v1h-1zM1169 610h1v1h-1zM1169 632h1v1h-1zM1169 654h1v1h-1zM1169 676h1v1h-1zM1169 697h1v1h-1zM1169 719h1v1h-1zM1169 741h1v1h-1zM1169 762h1v1h-1zM1169 784h1v1h-1zM1169 806h1v1h-1zM1169 828h1v1h-1zM1191 2h1v1h-1zM1191 24h1v1h-1zM1191 46h1v1h-1zM1191 68h1v1h-1zM1191 89h1v1h-1zM1191 111h1v1h-1zM1191 133h1v1h-1zM1191 154h1v1h-1zM1191 176h1v1h-1zM1191 198h1v1h-1zM1191 220h1v1h-1zM1191 241h1v1h-1zM1191 263h1v1h-1zM1191 285h1v1h-1zM1191 306h1v1h-1zM1191 328h1v1h-1zM1191 350h1v1h-1zM1191 372h1v1h-1zM1191 393h1v1h-1zM1191 415h1v1h-1zM1191 437h1v1h-1zM1191 458h1v1h-1zM1191 480h1v1h-1zM1191 502h1v1h-1zM1191 524h1v1h-1zM1191 545h1v1h-1zM1191 567h1v1h-1zM1191 589h1v1h-1zM1191 610h1v1h-1zM1191 632h1v1h-1zM1191 654h1v1h-1zM1191 676h1v1h-1zM1191 697h1v1h-1zM1191 719h1v1h-1zM1191 741h1v1h-1zM1191 762h1v1h-1zM1191 784h1v1h-1zM1191 806h1v1h-1zM1191 828h1v1h-1zM1212 2h1v1h-1zM1212 24h1v1h-1zM1212 46h1v1h-1zM1212 68h1v1h-1zM1212 89h1v1h-1zM1212 111h1v1h-1zM1212 133h1v1h-1zM1212 154h1v1h-1zM1212 176h1v1h-1zM1212 198h1v1h-1zM1212 220h1v1h-1zM1212 241h1v1h-1zM1212 263h1v1h-1zM1212 285h1v1h-1zM1212 306h1v1h-1zM1212 328h1v1h-1zM1212 350h1v1h-1zM1212 372h1v1h-1zM1212 393h1v1h-1zM1212 415h1v1h-1zM1212 437h1v1h-1zM1212 458h1v1h-1zM1212 480h1v1h-1zM1212 502h1v1h-1zM1212 524h1v1h-1zM1212 545h1v1h-1zM1212 567h1v1h-1zM1212 589h1v1h-1zM1212 610h1v1h-1zM1212 632h1v1h-1zM1212 654h1v1h-1zM1212 676h1v1h-1zM1212 697h1v1h-1zM1212 719h1v1h-1zM1212 741h1v1h-1zM1212 762h1v1h-1zM1212 784h1v1h-1zM1212 806h1v1h-1zM1212 828h1v1h-1zM1234 2h1v1h-1zM1234 24h1v1h-1zM1234 46h1v1h-1zM1234 68h1v1h-1zM1234 89h1v1h-1zM1234 111h1v1h-1zM1234 133h1v1h-1zM1234 154h1v1h-1zM1234 176h1v1h-1zM1234 198h1v1h-1zM1234 220h1v1h-1zM1234 241h1v1h-1zM1234 263h1v1h-1zM1234 285h1v1h-1zM1234 306h1v1h-1zM1234 328h1v1h-1zM1234 350h1v1h-1zM1234 372h1v1h-1zM1234 393h1v1h-1zM1234 415h1v1h-1zM1234 437h1v1h-1zM1234 458h1v1h-1zM1234 480h1v1h-1zM1234 502h1v1h-1zM1234 524h1v1h-1zM1234 545h1v1h-1zM1234 567h1v1h-1zM1234 589h1v1h-1zM1234 610h1v1h-1zM1234 632h1v1h-1zM1234 654h1v1h-1zM1234 676h1v1h-1zM1234 697h1v1h-1zM1234 719h1v1h-1zM1234 741h1v1h-1zM1234 762h1v1h-1zM1234 784h1v1h-1zM1234 806h1v1h-1zM1234 828h1v1h-1zM1256 2h1v1h-1zM1256 24h1v1h-1zM1256 46h1v1h-1zM1256 68h1v1h-1zM1256 89h1v1h-1zM1256 111h1v1h-1zM1256 133h1v1h-1zM1256 154h1v1h-1zM1256 176h1v1h-1zM1256 198h1v1h-1zM1256 220h1v1h-1zM1256 241h1v1h-1zM1256 263h1v1h-1zM1256 285h1v1h-1zM1256 306h1v1h-1zM1256 328h1v1h-1zM1256 350h1v1h-1zM1256 372h1v1h-1zM1256 393h1v1h-1zM1256 415h1v1h-1zM1256 437h1v1h-1zM1256 458h1v1h-1zM1256 480h1v1h-1zM1256 502h1v1h-1zM1256 524h1v1h-1zM1256 545h1v1h-1zM1256 567h1v1h-1zM1256 589h1v1h-1zM1256 610h1v1h-1zM1256 632h1v1h-1zM1256 654h1v1h-1zM1256 676h1v1h-1zM1256 697h1v1h-1zM1256 719h1v1h-1zM1256 741h1v1h-1zM1256 762h1v1h-1zM1256 784h1v1h-1zM1256 806h1v1h-1zM1256 828h1v1h-1zM1278 2h1v1h-1zM1278 24h1v1h-1zM1278 46h1v1h-1zM1278 68h1v1h-1zM1278 89h1v1h-1zM1278 111h1v1h-1zM1278 133h1v1h-1zM1278 154h1v1h-1zM1278 176h1v1h-1zM1278 198h1v1h-1zM1278 220h1v1h-1zM1278 241h1v1h-1zM1278 263h1v1h-1zM1278 285h1v1h-1zM1278 306h1v1h-1zM1278 328h1v1h-1zM1278 350h1v1h-1zM1278 372h1v1h-1zM1278 393h1v1h-1zM1278 415h1v1h-1zM1278 437h1v1h-1zM1278 458h1v1h-1zM1278 480h1v1h-1zM1278 502h1v1h-1zM1278 524h1v1h-1zM1278 545h1v1h-1zM1278 567h1v1h-1zM1278 589h1v1h-1zM1278 610h1v1h-1zM1278 632h1v1h-1zM1278 654h1v1h-1zM1278 676h1v1h-1zM1278 697h1v1h-1zM1278 719h1v1h-1zM1278 741h1v1h-1zM1278 762h1v1h-1zM1278 784h1v1h-1zM1278 806h1v1h-1zM1278 828h1v1h-1zM1299 2h1v1h-1zM1299 24h1v1h-1zM1299 46h1v1h-1zM1299 68h1v1h-1zM1299 89h1v1h-1zM1299 111h1v1h-1zM1299 133h1v1h-1zM1299 154h1v1h-1zM1299 176h1v1h-1zM1299 198h1v1h-1zM1299 220h1v1h-1zM1299 241h1v1h-1zM1299 263h1v1h-1zM1299 285h1v1h-1zM1299 306h1v1h-1zM1299 328h1v1h-1zM1299 350h1v1h-1zM1299 372h1v1h-1zM1299 393h1v1h-1zM1299 415h1v1h-1zM1299 437h1v1h-1zM1299 458h1v1h-1zM1299 480h1v1h-1zM1299 502h1v1h-1zM1299 524h1v1h-1zM1299 545h1v1h-1zM1299 567h1v1h-1zM1299 589h1v1h-1zM1299 610h1v1h-1zM1299 632h1v1h-1zM1299 654h1v1h-1zM1299 676h1v1h-1zM1299 697h1v1h-1zM1299 719h1v1h-1zM1299 741h1v1h-1zM1299 762h1v1h-1zM1299 784h1v1h-1zM1299 806h1v1h-1zM1299 828h1v1h-1zM1321 2h1v1h-1zM1321 24h1v1h-1zM1321 46h1v1h-1zM1321 68h1v1h-1zM1321 89h1v1h-1zM1321 111h1v1h-1zM1321 133h1v1h-1zM1321 154h1v1h-1zM1321 176h1v1h-1zM1321 198h1v1h-1zM1321 220h1v1h-1zM1321 241h1v1h-1zM1321 263h1v1h-1zM1321 285h1v1h-1zM1321 306h1v1h-1zM1321 328h1v1h-1zM1321 350h1v1h-1zM1321 372h1v1h-1zM1321 393h1v1h-1zM1321 415h1v1h-1zM1321 437h1v1h-1zM1321 458h1v1h-1zM1321 480h1v1h-1zM1321 502h1v1h-1zM1321 524h1v1h-1zM1321 545h1v1h-1zM1321 567h1v1h-1zM1321 589h1v1h-1zM1321 610h1v1h-1zM1321 632h1v1h-1zM1321 654h1v1h-1zM1321 676h1v1h-1zM1321 697h1v1h-1zM1321 719h1v1h-1zM1321 741h1v1h-1zM1321 762h1v1h-1zM1321 784h1v1h-1zM1321 806h1v1h-1zM1321 828h1v1h-1zM1343 2h1v1h-1zM1343 24h1v1h-1zM1343 46h1v1h-1zM1343 68h1v1h-1zM1343 89h1v1h-1zM1343 111h1v1h-1zM1343 133h1v1h-1zM1343 154h1v1h-1zM1343 176h1v1h-1zM1343 198h1v1h-1zM1343 220h1v1h-1zM1343 241h1v1h-1zM1343 263h1v1h-1zM1343 285h1v1h-1zM1343 306h1v1h-1zM1343 328h1v1h-1zM1343 350h1v1h-1zM1343 372h1v1h-1zM1343 393h1v1h-1zM1343 415h1v1h-1zM1343 437h1v1h-1zM1343 458h1v1h-1zM1343 480h1v1h-1zM1343 502h1v1h-1zM1343 524h1v1h-1zM1343 545h1v1h-1zM1343 567h1v1h-1zM1343 589h1v1h-1zM1343 610h1v1h-1zM1343 632h1v1h-1zM1343 654h1v1h-1zM1343 676h1v1h-1zM1343 697h1v1h-1zM1343 719h1v1h-1zM1343 741h1v1h-1zM1343 762h1v1h-1zM1343 784h1v1h-1zM1343 806h1v1h-1zM1343 828h1v1h-1zM1364 2h1v1h-1zM1364 24h1v1h-1zM1364 46h1v1h-1zM1364 68h1v1h-1zM1364 89h1v1h-1zM1364 111h1v1h-1zM1364 133h1v1h-1zM1364 154h1v1h-1zM1364 176h1v1h-1zM1364 198h1v1h-1zM1364 220h1v1h-1zM1364 241h1v1h-1zM1364 263h1v1h-1zM1364 285h1v1h-1zM1364 306h1v1h-1zM1364 328h1v1h-1zM1364 350h1v1h-1zM1364 372h1v1h-1zM1364 393h1v1h-1zM1364 415h1v1h-1zM1364 437h1v1h-1zM1364 458h1v1h-1zM1364 480h1v1h-1zM1364 502h1v1h-1zM1364 524h1v1h-1zM1364 545h1v1h-1zM1364 567h1v1h-1zM1364 589h1v1h-1zM1364 610h1v1h-1zM1364 632h1v1h-1zM1364 654h1v1h-1zM1364 676h1v1h-1zM1364 697h1v1h-1zM1364 719h1v1h-1zM1364 741h1v1h-1zM1364 762h1v1h-1zM1364 784h1v1h-1zM1364 806h1v1h-1zM1364 828h1v1h-1zM1386 2h1v1h-1zM1386 24h1v1h-1zM1386 46h1v1h-1zM1386 68h1v1h-1zM1386 89h1v1h-1zM1386 111h1v1h-1zM1386 133h1v1h-1zM1386 154h1v1h-1zM1386 176h1v1h-1zM1386 198h1v1h-1zM1386 220h1v1h-1zM1386 241h1v1h-1zM1386 263h1v1h-1zM1386 285h1v1h-1zM1386 306h1v1h-1zM1386 328h1v1h-1zM1386 350h1v1h-1zM1386 372h1v1h-1zM1386 393h1v1h-1zM1386 415h1v1h-1zM1386 437h1v1h-1zM1386 458h1v1h-1zM1386 480h1v1h-1zM1386 502h1v1h-1zM1386 524h1v1h-1zM1386 545h1v1h-1zM1386 567h1v1h-1zM1386 589h1v1h-1zM1386 610h1v1h-1zM1386 632h1v1h-1zM1386 654h1v1h-1zM1386 676h1v1h-1zM1386 697h1v1h-1zM1386 719h1v1h-1zM1386 741h1v1h-1zM1386 762h1v1h-1zM1386 784h1v1h-1zM1386 806h1v1h-1zM1386 828h1v1h-1zM1408 2h1v1h-1zM1408 24h1v1h-1zM1408 46h1v1h-1zM1408 68h1v1h-1zM1408 89h1v1h-1zM1408 111h1v1h-1zM1408 133h1v1h-1zM1408 154h1v1h-1zM1408 176h1v1h-1zM1408 198h1v1h-1zM1408 220h1v1h-1zM1408 241h1v1h-1zM1408 263h1v1h-1zM1408 285h1v1h-1zM1408 306h1v1h-1zM1408 328h1v1h-1zM1408 350h1v1h-1zM1408 372h1v1h-1zM1408 393h1v1h-1zM1408 415h1v1h-1zM1408 437h1v1h-1zM1408 458h1v1h-1zM1408 480h1v1h-1zM1408 502h1v1h-1zM1408 524h1v1h-1zM1408 545h1v1h-1zM1408 567h1v1h-1zM1408 589h1v1h-1zM1408 610h1v1h-1zM1408 632h1v1h-1zM1408 654h1v1h-1zM1408 676h1v1h-1zM1408 697h1v1h-1zM1408 719h1v1h-1zM1408 741h1v1h-1zM1408 762h1v1h-1zM1408 784h1v1h-1zM1408 806h1v1h-1zM1408 828h1v1h-1zM1430 2h1v1h-1zM1430 24h1v1h-1zM1430 46h1v1h-1zM1430 68h1v1h-1zM1430 89h1v1h-1zM1430 111h1v1h-1zM1430 133h1v1h-1zM1430 154h1v1h-1zM1430 176h1v1h-1zM1430 198h1v1h-1zM1430 220h1v1h-1zM1430 241h1v1h-1zM1430 263h1v1h-1zM1430 285h1v1h-1zM1430 306h1v1h-1zM1430 328h1v1h-1zM1430 350h1v1h-1zM1430 372h1v1h-1zM1430 393h1v1h-1zM1430 415h1v1h-1zM1430 437h1v1h-1zM1430 458h1v1h-1zM1430 480h1v1h-1zM1430 502h1v1h-1zM1430 524h1v1h-1zM1430 545h1v1h-1zM1430 567h1v1h-1zM1430 589h1v1h-1zM1430 610h1v1h-1zM1430 632h1v1h-1zM1430 654h1v1h-1zM1430 676h1v1h-1zM1430 697h1v1h-1zM1430 719h1v1h-1zM1430 741h1v1h-1zM1430 762h1v1h-1zM1430 784h1v1h-1zM1430 806h1v1h-1zM1430 828h1v1h-1zM1451 2h1v1h-1zM1451 24h1v1h-1zM1451 46h1v1h-1zM1451 68h1v1h-1zM1451 89h1v1h-1zM1451 111h1v1h-1zM1451 133h1v1h-1zM1451 154h1v1h-1zM1451 176h1v1h-1zM1451 198h1v1h-1zM1451 220h1v1h-1zM1451 241h1v1h-1zM1451 263h1v1h-1zM1451 285h1v1h-1zM1451 306h1v1h-1zM1451 328h1v1h-1zM1451 350h1v1h-1zM1451 372h1v1h-1zM1451 393h1v1h-1zM1451 415h1v1h-1zM1451 437h1v1h-1zM1451 458h1v1h-1zM1451 480h1v1h-1zM1451 502h1v1h-1zM1451 524h1v1h-1zM1451 545h1v1h-1zM1451 567h1v1h-1zM1451 589h1v1h-1zM1451 610h1v1h-1zM1451 632h1v1h-1zM1451 654h1v1h-1zM1451 676h1v1h-1zM1451 697h1v1h-1zM1451 719h1v1h-1zM1451 741h1v1h-1zM1451 762h1v1h-1zM1451 784h1v1h-1zM1451 806h1v1h-1zM1451 828h1v1h-1zM1473 2h1v1h-1zM1473 24h1v1h-1zM1473 46h1v1h-1zM1473 68h1v1h-1zM1473 89h1v1h-1zM1473 111h1v1h-1zM1473 133h1v1h-1zM1473 154h1v1h-1zM1473 176h1v1h-1zM1473 198h1v1h-1zM1473 220h1v1h-1zM1473 241h1v1h-1zM1473 263h1v1h-1zM1473 285h1v1h-1zM1473 306h1v1h-1zM1473 328h1v1h-1zM1473 350h1v1h-1zM1473 372h1v1h-1zM1473 393h1v1h-1zM1473 415h1v1h-1zM1473 437h1v1h-1zM1473 458h1v1h-1zM1473 480h1v1h-1zM1473 502h1v1h-1zM1473 524h1v1h-1zM1473 545h1v1h-1zM1473 567h1v1h-1zM1473 589h1v1h-1zM1473 610h1v1h-1zM1473 632h1v1h-1zM1473 654h1v1h-1zM1473 676h1v1h-1zM1473 697h1v1h-1zM1473 719h1v1h-1zM1473 741h1v1h-1zM1473 762h1v1h-1zM1473 784h1v1h-1zM1473 806h1v1h-1zM1473 828h1v1h-1zM1495 2h1v1h-1zM1495 24h1v1h-1zM1495 46h1v1h-1zM1495 68h1v1h-1zM1495 89h1v1h-1zM1495 111h1v1h-1zM1495 133h1v1h-1zM1495 154h1v1h-1zM1495 176h1v1h-1zM1495 198h1v1h-1zM1495 220h1v1h-1zM1495 241h1v1h-1zM1495 263h1v1h-1zM1495 285h1v1h-1zM1495 306h1v1h-1zM1495 328h1v1h-1zM1495 350h1v1h-1zM1495 372h1v1h-1zM1495 393h1v1h-1zM1495 415h1v1h-1zM1495 437h1v1h-1zM1495 458h1v1h-1zM1495 480h1v1h-1zM1495 502h1v1h-1zM1495 524h1v1h-1zM1495 545h1v1h-1zM1495 567h1v1h-1zM1495 589h1v1h-1zM1495 610h1v1h-1zM1495 632h1v1h-1zM1495 654h1v1h-1zM1495 676h1v1h-1zM1495 697h1v1h-1zM1495 719h1v1h-1zM1495 741h1v1h-1zM1495 762h1v1h-1zM1495 784h1v1h-1zM1495 806h1v1h-1zM1495 828h1v1h-1zM1516 2h1v1h-1zM1516 24h1v1h-1zM1516 46h1v1h-1zM1516 68h1v1h-1zM1516 89h1v1h-1zM1516 111h1v1h-1zM1516 133h1v1h-1zM1516 154h1v1h-1zM1516 176h1v1h-1zM1516 198h1v1h-1zM1516 220h1v1h-1zM1516 241h1v1h-1zM1516 263h1v1h-1zM1516 285h1v1h-1zM1516 306h1v1h-1zM1516 328h1v1h-1zM1516 350h1v1h-1zM1516 372h1v1h-1zM1516 393h1v1h-1zM1516 415h1v1h-1zM1516 437h1v1h-1zM1516 458h1v1h-1zM1516 480h1v1h-1zM1516 502h1v1h-1zM1516 524h1v1h-1zM1516 545h1v1h-1zM1516 567h1v1h-1zM1516 589h1v1h-1zM1516 610h1v1h-1zM1516 632h1v1h-1zM1516 654h1v1h-1zM1516 676h1v1h-1zM1516 697h1v1h-1zM1516 719h1v1h-1zM1516 741h1v1h-1zM1516 762h1v1h-1zM1516 784h1v1h-1zM1516 806h1v1h-1zM1516 828h1v1h-1zM1538 2h1v1h-1zM1538 24h1v1h-1zM1538 46h1v1h-1zM1538 68h1v1h-1zM1538 89h1v1h-1zM1538 111h1v1h-1zM1538 133h1v1h-1zM1538 154h1v1h-1zM1538 176h1v1h-1zM1538 198h1v1h-1zM1538 220h1v1h-1zM1538 241h1v1h-1zM1538 263h1v1h-1zM1538 285h1v1h-1zM1538 306h1v1h-1zM1538 328h1v1h-1zM1538 350h1v1h-1zM1538 372h1v1h-1zM1538 393h1v1h-1zM1538 415h1v1h-1zM1538 437h1v1h-1zM1538 458h1v1h-1zM1538 480h1v1h-1zM1538 502h1v1h-1zM1538 524h1v1h-1zM1538 545h1v1h-1zM1538 567h1v1h-1zM1538 589h1v1h-1zM1538 610h1v1h-1zM1538 632h1v1h-1zM1538 654h1v1h-1zM1538 676h1v1h-1zM1538 697h1v1h-1zM1538 719h1v1h-1zM1538 741h1v1h-1zM1538 762h1v1h-1zM1538 784h1v1h-1zM1538 806h1v1h-1zM1538 828h1v1h-1zM1560 2h1v1h-1zM1560 24h1v1h-1zM1560 46h1v1h-1zM1560 68h1v1h-1zM1560 89h1v1h-1zM1560 111h1v1h-1zM1560 133h1v1h-1zM1560 154h1v1h-1zM1560 176h1v1h-1zM1560 198h1v1h-1zM1560 220h1v1h-1zM1560 241h1v1h-1zM1560 263h1v1h-1zM1560 285h1v1h-1zM1560 306h1v1h-1zM1560 328h1v1h-1zM1560 350h1v1h-1zM1560 372h1v1h-1zM1560 393h1v1h-1zM1560 415h1v1h-1zM1560 437h1v1h-1zM1560 458h1v1h-1zM1560 480h1v1h-1zM1560 502h1v1h-1zM1560 524h1v1h-1zM1560 545h1v1h-1zM1560 567h1v1h-1zM1560 589h1v1h-1zM1560 610h1v1h-1zM1560 632h1v1h-1zM1560 654h1v1h-1zM1560 676h1v1h-1zM1560 697h1v1h-1zM1560 719h1v1h-1zM1560 741h1v1h-1zM1560 762h1v1h-1zM1560 784h1v1h-1zM1560 806h1v1h-1zM1560 828h1v1h-1zM1582 2h1v1h-1zM1582 24h1v1h-1zM1582 46h1v1h-1zM1582 68h1v1h-1zM1582 89h1v1h-1zM1582 111h1v1h-1zM1582 133h1v1h-1zM1582 154h1v1h-1zM1582 176h1v1h-1zM1582 198h1v1h-1zM1582 220h1v1h-1zM1582 241h1v1h-1zM1582 263h1v1h-1zM1582 285h1v1h-1zM1582 306h1v1h-1zM1582 328h1v1h-1zM1582 350h1v1h-1zM1582 372h1v1h-1zM1582 393h1v1h-1zM1582 415h1v1h-1zM1582 437h1v1h-1zM1582 458h1v1h-1zM1582 480h1v1h-1zM1582 502h1v1h-1zM1582 524h1v1h-1zM1582 545h1v1h-1zM1582 567h1v1h-1zM1582 589h1v1h-1zM1582 610h1v1h-1zM1582 632h1v1h-1zM1582 654h1v1h-1zM1582 676h1v1h-1zM1582 697h1v1h-1zM1582 719h1v1h-1zM1582 741h1v1h-1zM1582 762h1v1h-1zM1582 784h1v1h-1zM1582 806h1v1h-1zM1582 828h1v1h-1z" fill="#a8a8a8" shape-rendering="crispEdges"/><g fill="#c872ab" shape-rendering="crispEdges"><rect x="0" y="1" width="1600" height="1"/><rect x="0" y="18" width="1600" height="1"/><rect x="10" y="1" width="1" height="18"/><rect x="437" y="1" width="1" height="18"/><rect x="865" y="1" width="1" height="18"/><rect x="1293" y="1" width="1" height="18"/></g><g transform="translate(-45,-143)"><path d="M272.3 147.8L273.5 146.6H276.6L278 148V150.6L277 152.2L271.2 158.4H278.6M699.3 146.7H707L702.6 151.6H703.6Q707 152.4 707 155.4L705 158.3H700M1129.6 147.2L1128 149.6L1127.4 154.4H1133.8M1132.5 150.6V157.8M1561.5 146.7H1554.5L1554 152.2Q1555.5 151.5 1557.5 151.5Q1562 151.8 1562 155.2Q1561.6 158.8 1557.8 158.9H1554.2" fill="none" stroke="#c872ab" stroke-width="1.3" stroke-linejoin="round" stroke-linecap="round"/></g><rect x="756" y="0" width="1" height="830" fill="#a0a0a0" shape-rendering="crispEdges"/><rect x="0" y="393" width="1600" height="1" fill="#a0a0a0" shape-rendering="crispEdges"/><path d="M569.8 460.0 A66 66 0 1 1 658.2 460.0 L655.3 460.0 A60 62 0 1 0 572.7 460.0Z" fill="#c8c8c8"/><path d="M569.0 461.0 A66 66 0 1 1 659.0 461.0" fill="none" stroke="#f2eda1" stroke-width="1.6"/><path d="M552.0 442.0 Q558.0 454.0 569.0 463.0M676.0 442.0 Q670.0 454.0 659.0 463.0" fill="none" stroke="#4d7fc4" stroke-width="1"/><path d="M569.7 379.0 L613.4 365.5 L657.0 379.0 L657.0 383.5 L645.4 383.5 L645.4 405.4 L657.0 405.4 L657.0 481.0 L569.7 481.0 L569.7 405.4 L582.5 405.4 L582.5 383.5 L569.7 383.5Z" fill="none" stroke="#f2eda1" stroke-width="1.8"/><path d="M570.0 422.7 L585.2 422.7 L585.2 458.3 L641.7 458.3 L641.7 422.7 L657.0 422.7" fill="none" stroke="#f2eda1" stroke-width="1.8"/><circle cx="613.4" cy="415.4" r="13.2" fill="none" stroke="#f2eda1" stroke-width="1.8"/><rect x="595.5" y="435.5" width="35.8" height="17.3" fill="none" stroke="#f2eda1" stroke-width="1.8"/><path d="M609.0 437.3H619M614.4 432.0V443" stroke="#e040e0" stroke-width="1"/><g transform="translate(-45,-143)"><path d="M652.6 486.2V477.7H656.4Q658.2 477.7 658.2 479.6V480.4Q658.2 482.2 656.4 482.2H652.6M655.8 482.2L658.3 486.4M660.2 480.6L663.4 477.6V486.4M660.6 486.4H664.6" fill="none" stroke="#f2eda1" stroke-width="1.3" stroke-linejoin="round" stroke-linecap="round"/></g><circle cx="570.6" cy="395.4" r="9.0" fill="none" stroke="#4d7fc4" stroke-width="1"/><circle cx="570.6" cy="395.4" r="6.6" fill="none" stroke="#c83434" stroke-width="4.4"/><path d="M565.6 396.9h10" stroke="#fff" stroke-width="1.2" opacity=".8"/><path d="M569.6 391.4v3" stroke="#fff" stroke-width="1" opacity=".7"/><circle cx="657.2" cy="395.4" r="9.0" fill="none" stroke="#4d7fc4" stroke-width="1"/><circle cx="657.2" cy="395.4" r="6.6" fill="none" stroke="#c83434" stroke-width="4.4"/><path d="M652.2 396.9h10" stroke="#fff" stroke-width="1.2" opacity=".8"/><path d="M656.2 391.4v3" stroke="#fff" stroke-width="1" opacity=".7"/><circle cx="580.6" cy="480.20000000000005" r="6.3" fill="none" stroke="#4d7fc4" stroke-width="1"/><circle cx="580.6" cy="480.20000000000005" r="4.8" fill="none" stroke="#c83434" stroke-width="2.8"/><circle cx="580.6" cy="480.20000000000005" r="3.2" fill="none" stroke="#e8c000" stroke-width="1"/><path d="M576.6 480.7h8" stroke="#fff" stroke-width="1" opacity=".8"/><path d="M580.6 477.2v5" stroke="#f2eda1" stroke-width="1"/><circle cx="614.4" cy="480.20000000000005" r="6.3" fill="none" stroke="#4d7fc4" stroke-width="1"/><circle cx="614.4" cy="480.20000000000005" r="4.8" fill="none" stroke="#c83434" stroke-width="2.8"/><circle cx="614.4" cy="480.20000000000005" r="3.2" fill="none" stroke="#e8c000" stroke-width="1"/><path d="M610.4 480.7h8" stroke="#fff" stroke-width="1" opacity=".8"/><path d="M614.4 477.2v5" stroke="#f2eda1" stroke-width="1"/><circle cx="648.1" cy="480.20000000000005" r="6.3" fill="none" stroke="#4d7fc4" stroke-width="1"/><circle cx="648.1" cy="480.20000000000005" r="4.8" fill="none" stroke="#c83434" stroke-width="2.8"/><circle cx="648.1" cy="480.20000000000005" r="3.2" fill="none" stroke="#e8c000" stroke-width="1"/><path d="M644.1 480.7h8" stroke="#fff" stroke-width="1" opacity=".8"/><path d="M648.1 477.2v5" stroke="#f2eda1" stroke-width="1"/></svg>
<div class="a" style="left:44px;top:142px;width:1px;height:831px;background:#a0a0a0;"></div>
<div class="a" style="left:4px;top:437px;width:36px;height:1px;background:#a0a0a0;"></div>
<div class="a" style="left:4px;top:487px;width:36px;height:1px;background:#a0a0a0;"></div>
<div class="a" style="left:4px;top:578px;width:36px;height:1px;background:#a0a0a0;"></div>
<div class="a" style="left:4px;top:669px;width:36px;height:1px;background:#a0a0a0;"></div>
<div class="a" style="left:4px;top:760px;width:36px;height:1px;background:#a0a0a0;"></div>
<div class="a" style="left:4px;top:892px;width:36px;height:1px;background:#a0a0a0;"></div>
<div class="a" style="left:3px;top:148px;width:38px;height:38px;background:#b3d7f3;border:1px solid #0078d7"></div>
<div class="a" style="left:3px;top:353px;width:38px;height:38px;background:#b3d7f3;border:1px solid #0078d7"></div>
<div class="a" style="left:3px;top:394px;width:38px;height:38px;background:#b3d7f3;border:1px solid #0078d7"></div>
<div class="a" style="left:3px;top:444px;width:38px;height:38px;background:#b3d7f3;border:1px solid #0078d7"></div>
<div class="a" style="left:3px;top:494px;width:38px;height:38px;background:#b3d7f3;border:1px solid #0078d7"></div>
<div class="a" style="left:3px;top:535px;width:38px;height:38px;background:#b3d7f3;border:1px solid #0078d7"></div>
<div class="a" style="left:3px;top:676px;width:38px;height:38px;background:#b3d7f3;border:1px solid #0078d7"></div>
<div class="a" style="left:3px;top:899px;width:38px;height:38px;background:#b3d7f3;border:1px solid #0078d7"></div>
<svg style="left:0px;top:140px;" width="45" height="820" viewBox="0 0 45 820"><g transform="translate(0,-140)"><rect x="9.0" y="154.2" width="3.6" height="3.6" transform="rotate(45 10.8 156)" fill="#545454"/><rect x="9.0" y="162.2" width="3.6" height="3.6" transform="rotate(45 10.8 164)" fill="#545454"/><rect x="9.0" y="169.0" width="3.6" height="3.6" transform="rotate(45 10.8 170.8)" fill="#545454"/><rect x="9.0" y="176.89999999999998" width="3.6" height="3.6" transform="rotate(45 10.8 178.7)" fill="#545454"/><rect x="17.2" y="154.2" width="3.6" height="3.6" transform="rotate(45 19 156)" fill="#545454"/><rect x="17.2" y="162.2" width="3.6" height="3.6" transform="rotate(45 19 164)" fill="#545454"/><rect x="17.2" y="169.0" width="3.6" height="3.6" transform="rotate(45 19 170.8)" fill="#545454"/><rect x="17.2" y="176.89999999999998" width="3.6" height="3.6" transform="rotate(45 19 178.7)" fill="#545454"/><rect x="24.0" y="154.2" width="3.6" height="3.6" transform="rotate(45 25.8 156)" fill="#545454"/><rect x="24.0" y="162.2" width="3.6" height="3.6" transform="rotate(45 25.8 164)" fill="#545454"/><rect x="24.0" y="169.0" width="3.6" height="3.6" transform="rotate(45 25.8 170.8)" fill="#545454"/><rect x="24.0" y="176.89999999999998" width="3.6" height="3.6" transform="rotate(45 25.8 178.7)" fill="#545454"/><rect x="31.900000000000002" y="154.2" width="3.6" height="3.6" transform="rotate(45 33.7 156)" fill="#545454"/><rect x="31.900000000000002" y="162.2" width="3.6" height="3.6" transform="rotate(45 33.7 164)" fill="#545454"/><rect x="31.900000000000002" y="169.0" width="3.6" height="3.6" transform="rotate(45 33.7 170.8)" fill="#545454"/><rect x="31.900000000000002" y="176.89999999999998" width="3.6" height="3.6" transform="rotate(45 33.7 178.7)" fill="#545454"/><rect x="9.200000000000001" y="194.9" width="3.2" height="3.2" transform="rotate(45 10.8 196.5)" fill="#545454"/><rect x="17.4" y="194.9" width="3.2" height="3.2" transform="rotate(45 19 196.5)" fill="#545454"/><rect x="24.4" y="194.9" width="3.2" height="3.2" transform="rotate(45 26 196.5)" fill="#545454"/><rect x="9.200000000000001" y="202.9" width="3.2" height="3.2" transform="rotate(45 10.8 204.5)" fill="#545454"/><rect x="17.4" y="202.9" width="3.2" height="3.2" transform="rotate(45 19 204.5)" fill="#545454"/><rect x="9.200000000000001" y="210.4" width="3.2" height="3.2" transform="rotate(45 10.8 212)" fill="#545454"/><path d="M7.6 222.5L36.7 194" stroke="#545454" stroke-width="1.6"/><path d="M31 201h2M32 200v2M34.5 201h2M35.5 200v2M27 205.5h2M28 204.5v2M31 205.5h2M32 204.5v2M34.5 205.5h2M35.5 204.5v2M23 209.5h2M24 208.5v2M27 209.5h2M28 208.5v2M31 209.5h2M32 208.5v2M34.5 209.5h2M35.5 208.5v2M27 213.5h2M28 212.5v2M31 213.5h2M32 212.5v2M34.5 213.5h2M35.5 212.5v2M31 217.5h2M32 216.5v2M34.5 217.5h2M35.5 216.5v2M34.5 221h2M35.5 220v2" stroke="#545454" stroke-width="0.8"/><path d="M9.5 263V237M9.5 263H36.5M9.5 263L33.5 238" stroke="#545454" stroke-width="1.8" fill="none"/><polygon points="9.5,234 7,240 12,240" fill="#545454"/><polygon points="37,263 31,260.5 31,265.5" fill="#545454"/><circle cx="34" cy="237.5" r="2.6" fill="#c51f3e"/><path d="M17 263a8 8 0 0 0 -2 -6" stroke="#545454" stroke-width="1" fill="none"/><text x="15" y="249" font-size="12" fill="#545454" font-family="Liberation Sans">r</text><text x="24" y="260" font-size="12" font-style="italic" fill="#545454" font-family="Liberation Sans">θ</text><text x="22.5" y="292" font-size="15" font-weight="bold" fill="#545454" text-anchor="middle" font-family="Liberation Sans">in</text><path d="M12 297.5H33" stroke="#545454" stroke-width="2.2"/><polygon points="8.5,297.5 14,294.0 14,301.0" fill="#545454"/><polygon points="36.5,297.5 31,294.0 31,301.0" fill="#545454"/><text x="22.5" y="332.5" font-size="15" font-weight="bold" fill="#545454" text-anchor="middle" font-family="Liberation Sans">mil</text><path d="M12 338H33" stroke="#545454" stroke-width="2.2"/><polygon points="8.5,338 14,334.5 14,341.5" fill="#545454"/><polygon points="36.5,338 31,334.5 31,341.5" fill="#545454"/><text x="22.5" y="373.5" font-size="15" font-weight="bold" fill="#545454" text-anchor="middle" font-family="Liberation Sans">mm</text><path d="M12 379H33" stroke="#545454" stroke-width="2.2"/><polygon points="8.5,379 14,375.5 14,382.5" fill="#545454"/><polygon points="36.5,379 31,375.5 31,382.5" fill="#545454"/><path d="M8 414H37M23 400V428" stroke="#a9c7dd" stroke-width="0.8"/><path d="M17 414H29M23 408V420" stroke="#1b80c8" stroke-width="2.6"/><path d="M23 414l0 12l3-3l2.5 5l2-1l-2.5-5h4z" fill="#545454"/><path d="M12 449.5V476.5M8.5 473.5H36M12 475L31 455" stroke="#545454" stroke-width="2.6" fill="none"/><path d="M12 465H21.5V473" stroke="#545454" stroke-width="1" fill="none"/><path d="M12.4 506L31 520.8M29.3 507.5L14.6 522.6M12.4 506L36.5 509" stroke="#545454" stroke-width="1.3"/><circle cx="12.4" cy="506" r="3.2" fill="#fff" stroke="#545454" stroke-width="1.1"/><circle cx="29.3" cy="507.5" r="3.2" fill="#fff" stroke="#545454" stroke-width="1.1"/><circle cx="14.6" cy="522.6" r="3.2" fill="#fff" stroke="#545454" stroke-width="1.1"/><circle cx="31" cy="520.8" r="3.2" fill="#fff" stroke="#545454" stroke-width="1.1"/><path d="M8 568L36.4 540M10.7 555.8L23.4 542.7M20 565.8Q30 564 33.7 552.3" stroke="#545454" stroke-width="1.3" fill="none"/><ellipse cx="10.7" cy="555.8" rx="3" ry="2.6" fill="#fff" stroke="#545454" stroke-width="1.1"/><ellipse cx="23.4" cy="542.7" rx="3" ry="2.6" fill="#fff" stroke="#545454" stroke-width="1.1"/><ellipse cx="20" cy="565.8" rx="3" ry="2.6" fill="#fff" stroke="#545454" stroke-width="1.1"/><ellipse cx="33.7" cy="552.3" rx="3" ry="2.6" fill="#fff" stroke="#545454" stroke-width="1.1"/><path d="M15 589l6 4h8l7 6" stroke="#c51f3e" stroke-width="2.6" fill="none"/><path d="M14 595l7 6h6l9 7" stroke="#c51f3e" stroke-width="2.6" fill="none"/><path d="M7 592l9 8" stroke="#545454" stroke-width="2.6"/><path d="M7 605l7 5h9l9 6" stroke="#545454" stroke-width="2.6" fill="none"/><circle cx="20" cy="604.5" r="3.3" fill="#fff" stroke="#f0950a" stroke-width="2.2"/><path d="M7 635h12l6 6v18M23 630l6 6v23" stroke="#b9b9b9" stroke-width="2.4" fill="none"/><path d="M18 646H37" stroke="#a9cce6" stroke-width="2.4"/><path d="M16 648v11" stroke="#e8a0b0" stroke-width="2.6"/><circle cx="16" cy="645.5" r="3.8" fill="#fff" stroke="#f6c889" stroke-width="2.2"/><path d="M19.5 683.5h16v24h-25v-12h9z" fill="#35aee8" stroke="#1478b8" stroke-width="1.2"/><circle cx="29" cy="695" r="4" fill="#b3d7f3"/><path d="M27 695h6" stroke="#545454" stroke-width="2.4"/><path d="M19.5 725h16v24h-25v-11.5h9z" fill="none" stroke="#1b80c8" stroke-width="1.5" stroke-dasharray="2.2 2"/><path d="M27 736h7" stroke="#545454" stroke-width="2.4"/><path d="M8 774h29v28h-29v-9a3 3 0 0 0 0 -6z" fill="none" stroke="#545454" stroke-width="1.2"/><rect x="11" y="771.5" width="6" height="6" fill="#1b80c8"/><path d="M11 801v-6.5h6v6.5" stroke="#1b80c8" stroke-width="1.3" fill="none"/><rect x="19" y="771.5" width="6" height="6" fill="#1b80c8"/><path d="M19 801v-6.5h6v6.5" stroke="#1b80c8" stroke-width="1.3" fill="none"/><rect x="27" y="771.5" width="6" height="6" fill="#1b80c8"/><path d="M27 801v-6.5h6v6.5" stroke="#1b80c8" stroke-width="1.3" fill="none"/><path d="M9 803L37 772" stroke="#545454" stroke-width="1.8"/><circle cx="25" cy="827" r="12" fill="none" stroke="#b9b9b9" stroke-width="1"/><path d="M25 815a12 12 0 0 0 -12 12a12 12 0 0 0 3 8l4-4a6 6 0 0 1 9-9l4-4a12 12 0 0 0 -8 -3z" fill="#f0950a"/><circle cx="25" cy="827" r="5.5" fill="none" stroke="#b9b9b9" stroke-width="1"/><path d="M8 842L37 813" stroke="#545454" stroke-width="1.8"/><path d="M22 855v6M22 861v22" stroke="#c51f3e" stroke-width="4" stroke-linecap="round"/><path d="M22 862v21M26 862v21" stroke="#d85f75" stroke-width="1.6"/><path d="M10 868.5H22" stroke="#1b80c8" stroke-width="4" stroke-linecap="round"/><path d="M24 867H37M24 870H37" stroke="#4b95d0" stroke-width="1.5"/><path d="M8 883L37 854" stroke="#545454" stroke-width="1.8"/><polygon points="22,934 34,922 22,918 10,922" fill="#f0950a"/><polygon points="22,930 34,918.5 22,915 10,918.5" fill="#545454"/><polygon points="22,926 34,915 22,905 10,915" fill="#1b80c8"/></g></svg>
<div class="a" style="left:1649px;top:148px;width:38px;height:38px;background:#b3d7f3;border:1px solid #0078d7"></div>
<div class="a" style="left:1651px;top:232px;width:34px;height:1px;background:#a0a0a0;"></div>
<div class="a" style="left:1690px;top:142px;width:5px;height:831px;background:#dadada;"></div>
<div class="a" style="left:1695px;top:143px;width:225px;height:25px;background:#bababa;"></div>
<div class="t" style="left:1699px;top:147px;font-size:15px;color:#000;">外观</div>
<div class="a" style="left:1696px;top:174px;width:56px;height:28px;background:#fff;border:1px solid #d9d9d9;border-bottom:none"></div>
<div class="a" style="left:1752px;top:176px;width:52px;height:26px;background:#f0f0f0;border:1px solid #d9d9d9;border-bottom:none"></div>
<div class="a" style="left:1804px;top:176px;width:53px;height:26px;background:#f0f0f0;border:1px solid #d9d9d9;border-bottom:none"></div>
<div class="t" style="left:1703px;top:179px;font-size:15px;color:#000;">层</div>
<div class="t" style="left:1757px;top:181px;font-size:15px;color:#000;">对象</div>
<div class="t" style="left:1811px;top:181px;font-size:15px;color:#000;">网络</div>
<div class="a" style="left:1699px;top:201px;width:221px;height:120px;background:#f0f0f0;border:1px solid #d9d9d9"></div>
<div class="a" style="left:1700px;top:202px;width:195px;height:22px;background:#dcdcdc;"></div>
<div class="a" style="left:1718px;top:206px;width:18px;height:15px;background:#c83434;"></div>
<svg style="left:1742px;top:205px;" width="16" height="16" viewBox="0 0 16 16"><circle cx="8" cy="8" r="8" fill="#5a5a5a"/><path d="M2.5 8Q8 2.5 13.5 8Q8 13.5 2.5 8z" fill="#fff"/><circle cx="8" cy="8" r="1.6" fill="none" stroke="#5a5a5a" stroke-width="1"/></svg>
<div class="t" style="left:1763px;top:207px;font-size:14px;color:#000;">F.Cu</div>
<div class="a" style="left:1718px;top:228px;width:18px;height:15px;background:#4d7fc4;"></div>
<svg style="left:1742px;top:227px;" width="16" height="16" viewBox="0 0 16 16"><circle cx="8" cy="8" r="8" fill="#5a5a5a"/><path d="M2.5 8Q8 2.5 13.5 8Q8 13.5 2.5 8z" fill="#fff"/><circle cx="8" cy="8" r="1.6" fill="none" stroke="#5a5a5a" stroke-width="1"/></svg>
<div class="t" style="left:1763px;top:229px;font-size:14px;color:#000;">B.Cu</div>
<div class="a" style="left:1718px;top:250px;width:18px;height:15px;background:#840084;"></div>
<svg style="left:1742px;top:249px;" width="16" height="16" viewBox="0 0 16 16"><circle cx="8" cy="8" r="8" fill="#5a5a5a"/><path d="M2.5 8Q8 2.5 13.5 8Q8 13.5 2.5 8z" fill="#fff"/><circle cx="8" cy="8" r="1.6" fill="none" stroke="#5a5a5a" stroke-width="1"/></svg>
<div class="t" style="left:1763px;top:251px;font-size:14px;color:#000;">F.Adhesive</div>
<div class="a" style="left:1718px;top:272px;width:18px;height:15px;background:#000084;"></div>
<svg style="left:1742px;top:271px;" width="16" height="16" viewBox="0 0 16 16"><circle cx="8" cy="8" r="8" fill="#5a5a5a"/><path d="M2.5 8Q8 2.5 13.5 8Q8 13.5 2.5 8z" fill="#fff"/><circle cx="8" cy="8" r="1.6" fill="none" stroke="#5a5a5a" stroke-width="1"/></svg>
<div class="t" style="left:1763px;top:273px;font-size:14px;color:#000;">B.Adhesive</div>
<div class="a" style="left:1718px;top:294px;width:18px;height:15px;background:#a59186;"></div>
<svg style="left:1742px;top:293px;" width="16" height="16" viewBox="0 0 16 16"><circle cx="8" cy="8" r="8" fill="#5a5a5a"/><path d="M2.5 8Q8 2.5 13.5 8Q8 13.5 2.5 8z" fill="#fff"/><circle cx="8" cy="8" r="1.6" fill="none" stroke="#5a5a5a" stroke-width="1"/></svg>
<div class="t" style="left:1763px;top:295px;font-size:14px;color:#000;">F.Paste</div>
<svg style="left:1706px;top:207px;" width="7" height="11" viewBox="0 0 7 11"><polygon points="0,0 7,5.5 0,11" fill="#4040ff"/></svg>
<div class="a" style="left:1896px;top:224px;width:19px;height:97px;background:#cdcdcd;"></div>
<svg style="left:1900px;top:208px;" width="11" height="7" viewBox="0 0 11 7"><path d="M0.5 6L5.5 1L10.5 6" fill="none" stroke="#555" stroke-width="1.3"/></svg>
<div class="a" style="left:1700px;top:891px;width:16px;height:16px;background:#fff;border:1px solid #333"></div>
<svg style="left:1703px;top:895px;" width="10" height="8" viewBox="0 0 10 8"><path d="M0.5 4L3.5 7L9.5 0.5" fill="none" stroke="#333" stroke-width="1.2"/></svg>
<div class="t" style="left:1720px;top:892px;font-size:13px;color:#000;">走线</div>
<div class="a" style="left:1789px;top:891px;width:16px;height:16px;background:#fff;border:1px solid #333"></div>
<svg style="left:1792px;top:895px;" width="10" height="8" viewBox="0 0 10 8"><path d="M0.5 4L3.5 7L9.5 0.5" fill="none" stroke="#333" stroke-width="1.2"/></svg>
<div class="t" style="left:1809px;top:892px;font-size:13px;color:#000;">过孔</div>
<div class="a" style="left:1700px;top:911px;width:16px;height:16px;background:#fff;border:1px solid #333"></div>
<svg style="left:1703px;top:915px;" width="10" height="8" viewBox="0 0 10 8"><path d="M0.5 4L3.5 7L9.5 0.5" fill="none" stroke="#333" stroke-width="1.2"/></svg>
<div class="t" style="left:1720px;top:912px;font-size:13px;color:#000;">焊盘</div>
<div class="a" style="left:1789px;top:911px;width:16px;height:16px;background:#fff;border:1px solid #333"></div>
<svg style="left:1792px;top:915px;" width="10" height="8" viewBox="0 0 10 8"><path d="M0.5 4L3.5 7L9.5 0.5" fill="none" stroke="#333" stroke-width="1.2"/></svg>
<div class="t" style="left:1809px;top:912px;font-size:13px;color:#000;">图形</div>
<div class="a" style="left:1700px;top:931px;width:16px;height:16px;background:#fff;border:1px solid #333"></div>
<svg style="left:1703px;top:935px;" width="10" height="8" viewBox="0 0 10 8"><path d="M0.5 4L3.5 7L9.5 0.5" fill="none" stroke="#333" stroke-width="1.2"/></svg>
<div class="t" style="left:1720px;top:932px;font-size:13px;color:#000;">填充区</div>
<div class="a" style="left:1789px;top:931px;width:16px;height:16px;background:#fff;border:1px solid #333"></div>
<svg style="left:1792px;top:935px;" width="10" height="8" viewBox="0 0 10 8"><path d="M0.5 4L3.5 7L9.5 0.5" fill="none" stroke="#333" stroke-width="1.2"/></svg>
<div class="t" style="left:1809px;top:932px;font-size:13px;color:#000;">规则域</div>
<div class="a" style="left:1700px;top:951px;width:16px;height:16px;background:#fff;border:1px solid #333"></div>
<svg style="left:1703px;top:955px;" width="10" height="8" viewBox="0 0 10 8"><path d="M0.5 4L3.5 7L9.5 0.5" fill="none" stroke="#333" stroke-width="1.2"/></svg>
<div class="t" style="left:1720px;top:952px;font-size:13px;color:#000;">测量标注</div>
<div class="a" style="left:1789px;top:951px;width:16px;height:16px;background:#fff;border:1px solid #333"></div>
<svg style="left:1792px;top:955px;" width="10" height="8" viewBox="0 0 10 8"><path d="M0.5 4L3.5 7L9.5 0.5" fill="none" stroke="#333" stroke-width="1.2"/></svg>
<div class="t" style="left:1809px;top:952px;font-size:13px;color:#000;">其他项目</div>
<svg style="left:1640px;top:140px;" width="60" height="820" viewBox="0 0 60 820"><g transform="translate(-1640,-140)"><path d="M1662 157.5L1675 168.5L1669.5 169.5L1672 175L1669 176.5L1666.5 171L1662.5 174.5z" fill="#545454"/><path d="M1655.4 193L1683 220.3M1683 196.3L1655.9 222.7" stroke="#545454" stroke-width="1.5"/><circle cx="1668.6" cy="208.6" r="2.6" fill="#fff" stroke="#545454" stroke-width="1"/><path d="M1653.5 247.5h29v21.5h-29v-8a3 3 0 0 0 0 -5.5z" fill="none" stroke="#545454" stroke-width="1.1"/><rect x="1657" y="243" width="6.4" height="8.6" fill="#1b80c8"/><rect x="1657" y="264.4" width="6.4" height="8.4" fill="#1b80c8"/><rect x="1666.3" y="243" width="6.4" height="8.6" fill="#1b80c8"/><rect x="1666.3" y="264.4" width="6.4" height="8.4" fill="#1b80c8"/><rect x="1675" y="243" width="6.4" height="8.6" fill="#1b80c8"/><rect x="1675" y="264.4" width="6.4" height="8.4" fill="#1b80c8"/><path d="M1656.2 310L1661 299.6H1675.4L1681.9 286" stroke="#1b80c8" stroke-width="2.4" fill="none"/><path d="M1658 913H1682M1679 919V929M1669 932H1682" stroke="#545454" stroke-width="1.1"/><polygon points="1679,916 1676.5,920 1681.5,920" fill="#545454"/><polygon points="1679,931 1676.5,927 1681.5,927" fill="#545454"/><circle cx="1657.5" cy="912.5" r="3.8" fill="#1b80c8"/><circle cx="1668.5" cy="933" r="3.8" fill="#1b80c8"/><polygon points="1687,933 1687,942 1678,942" fill="#000"/></g></svg>
<div class="a" style="left:0px;top:973px;width:1695px;height:1px;background:#d8d8d8;"></div>
<div class="t" style="left:15px;top:977px;font-size:15px;color:#595959;">焊盘</div>
<div class="t" style="left:15px;top:997.5px;font-size:16px;color:#595959;">5</div>
<div class="t" style="left:84px;top:977px;font-size:15px;color:#595959;">过孔</div>
<div class="t" style="left:84px;top:997.5px;font-size:16px;color:#595959;">0</div>
<div class="t" style="left:153px;top:977px;font-size:15px;color:#595959;">走线段</div>
<div class="t" style="left:153px;top:997.5px;font-size:16px;color:#595959;">0</div>
<div class="t" style="left:237px;top:977px;font-size:15px;color:#595959;">网络</div>
<div class="t" style="left:237px;top:997.5px;font-size:16px;color:#595959;">5</div>
<div class="t" style="left:306px;top:977px;font-size:15px;color:#595959;">未布线</div>
<div class="t" style="left:306px;top:997.5px;font-size:16px;color:#595959;">0</div>
<div class="a" style="left:0px;top:1014px;width:1920px;height:1px;background:#d8d8d8;"></div>
<div class="a" style="left:361px;top:1017px;width:1px;height:25px;background:#d8d8d8;"></div>
<div class="a" style="left:468px;top:1017px;width:1px;height:25px;background:#d8d8d8;"></div>
<div class="a" style="left:694px;top:1017px;width:1px;height:25px;background:#d8d8d8;"></div>
<div class="a" style="left:1054px;top:1017px;width:1px;height:25px;background:#d8d8d8;"></div>
<div class="a" style="left:1315px;top:1017px;width:1px;height:25px;background:#d8d8d8;"></div>
<div class="a" style="left:1444px;top:1017px;width:1px;height:25px;background:#d8d8d8;"></div>
<div class="a" style="left:1681px;top:1017px;width:1px;height:25px;background:#d8d8d8;"></div>
<div class="t" style="left:366px;top:1022.5px;font-size:16px;color:#000;">Z 2.39</div>
<div class="t" style="left:473px;top:1022.5px;font-size:16px;color:#000;">X 147.3200&nbsp; Y -55.8800</div>
<div class="t" style="left:700px;top:1022.5px;font-size:16px;color:#000;">dx 147.3200&nbsp; dy -55.8800&nbsp; dist 157.5619</div>
<div class="t" style="left:1058px;top:1022.5px;font-size:16px;color:#000;">栅格 <span style="font-size:16px">2.5400</span></div>
<div class="t" style="left:1320px;top:1022.5px;font-size:16px;color:#000;">mm</div>
<div class="t" style="left:1449px;top:1022.5px;font-size:16px;color:#000;">选择项目</div>
<div class="a" style="left:860px;top:310px;width:1070px;height:589px;box-shadow:0 4px 14px rgba(0,0,0,.35)"></div>
<div class="a" style="left:859px;top:309px;width:1065px;height:590px;background:#fff;border:1px solid #9a9a9a"></div>
<svg style="left:872px;top:318px;" width="16" height="22" viewBox="0 0 16 22"><rect x="1" y="0" width="12" height="13" rx="1.5" fill="#333"/><rect x="1" y="12" width="12" height="3" fill="#555"/><rect x="0" y="15" width="14" height="1.8" fill="#2a8ad4"/><path d="M4 17v4M9 17v4" stroke="#999" stroke-width="0.8"/></svg>
<div class="t" style="left:894px;top:320px;font-size:15px;color:#000;">3D 查看器</div>
<svg style="left:1839px;top:327px;" width="13" height="2" viewBox="0 0 13 2"><rect x="0" y="0" width="12" height="1" fill="#000"/></svg>
<svg style="left:1897px;top:322px;" width="13" height="13" viewBox="0 0 13 13"><rect x="0.5" y="0.5" width="11" height="11" fill="none" stroke="#000"/></svg>
<div class="t" style="left:867px;top:352px;font-size:15px;color:#000;">文件 (<u>F</u>)</div>
<div class="t" style="left:933px;top:352px;font-size:15px;color:#000;">编辑 (<u>E</u>)</div>
<div class="t" style="left:999px;top:352px;font-size:15px;color:#000;">视图 (<u>V</u>)</div>
<div class="t" style="left:1067px;top:352px;font-size:15px;color:#000;">设置 (<u>S</u>)</div>
<div class="t" style="left:1134px;top:352px;font-size:15px;color:#000;">帮助 (<u>H</u>)</div>
<div class="a" style="left:860px;top:370px;width:1060px;height:46px;background:#f0f0f0;"></div>
<div class="a" style="left:909px;top:377px;width:1px;height:34px;background:#a0a0a0;"></div>
<div class="a" style="left:959px;top:377px;width:1px;height:34px;background:#a0a0a0;"></div>
<div class="a" style="left:1009px;top:377px;width:1px;height:34px;background:#a0a0a0;"></div>
<div class="a" style="left:1182px;top:377px;width:1px;height:34px;background:#a0a0a0;"></div>
<div class="a" style="left:1273px;top:377px;width:1px;height:34px;background:#a0a0a0;"></div>
<div class="a" style="left:1364px;top:377px;width:1px;height:34px;background:#a0a0a0;"></div>
<div class="a" style="left:1455px;top:377px;width:1px;height:34px;background:#a0a0a0;"></div>
<div class="a" style="left:1505px;top:377px;width:1px;height:34px;background:#a0a0a0;"></div>
<div class="a" style="left:1678px;top:377px;width:1px;height:34px;background:#a0a0a0;"></div>
<div class="a" style="left:1728px;top:377px;width:1px;height:34px;background:#a0a0a0;"></div>
<div class="a" style="left:1139px;top:375px;width:38px;height:38px;background:#b3d7f3;border:1px solid #0078d7"></div>
<div class="a" style="left:1735px;top:375px;width:39px;height:38px;background:#b3d7f3;border:1px solid #0078d7"></div>
<svg style="left:860px;top:370px;" width="1060" height="46" viewBox="0 0 1060 46"><g transform="translate(-860,-370)"><rect x="870" y="379" width="19" height="15.5" rx="1.5" fill="#333"/><path d="M871 381.5h17" stroke="#777" stroke-width="0.8"/><rect x="870" y="396" width="19" height="5" rx="1" fill="#333"/><path d="M871 397h17" stroke="#777" stroke-width="0.8"/><rect x="870" y="403" width="16" height="4" fill="#1b80c8"/><circle cx="892" cy="400.4" r="8.1" fill="#c51f3e"/><path d="M892 394.5v9.5M888 400l4 4.5l4-4.5" stroke="#fff" stroke-width="2.2" fill="none"/><path d="M921.5 380.5h14v25h-14z" fill="#f4f4f4" stroke="#808080" stroke-width="1.3"/><path d="M930 383.5h12.5l7 7v18h-19.5z" fill="#f4f4f4" stroke="#808080" stroke-width="1.4"/><path d="M942 383v8h8z" fill="#545454"/><path d="M933 394.5h10M933 397.5h6" stroke="#545454" stroke-width="1.3"/><rect x="970" y="390" width="11" height="9" fill="#545454"/><polygon points="980.5,394.5 986,390 986,399" fill="#545454"/><path d="M986 393.5L999.5 383.2M986 394L999.5 390.8M986 395L999.5 397.4M986 395.5L999.5 405" stroke="#38b6ea" stroke-width="1.2"/><path d="M1022 392 A13 13 0 0 1 1048 388" fill="none" stroke="#545454" stroke-width="2.8"/><path d="M1048 397 A13 13 0 0 1 1022 401" fill="none" stroke="#545454" stroke-width="2.8"/><path d="M1048.5 382l-1 6.5l-6 -1M1021.5 406l1 -6.5l6 1" fill="none" stroke="#545454" stroke-width="2.6" stroke-linecap="round" stroke-linejoin="round"/><circle cx="1073.7" cy="391.7" r="10.5" fill="none" stroke="#545454" stroke-width="2.6"/><path d="M1081.7 399.7L1089.2 407.2" stroke="#545454" stroke-width="3" stroke-linecap="round"/><path d="M1073.7 386v11.5M1068 391.7h11.5" stroke="#545454" stroke-width="2.6"/><circle cx="1114.7" cy="391.7" r="10.5" fill="none" stroke="#545454" stroke-width="2.6"/><path d="M1122.7 399.7L1130.2 407.2" stroke="#545454" stroke-width="3" stroke-linecap="round"/><path d="M1109 391.7h11.5" stroke="#545454" stroke-width="2.6"/><circle cx="1155.7" cy="391.7" r="10.5" fill="none" stroke="#545454" stroke-width="2.6"/><path d="M1163.7 399.7L1171.2 407.2" stroke="#545454" stroke-width="3" stroke-linecap="round"/><path d="M1150.5 386h6.5l3.5 3.5v9.5h-10z" fill="#808080"/><path d="M1208.2 379V395.5L1196.7 407" stroke="#545454" stroke-width="2" fill="none"/><path d="M1209 395.5H1223" stroke="#c51f3e" stroke-width="1.8" stroke-dasharray="3 2"/><path d="M1196 381.8l7 8M1203 381.8l-7 8" stroke="#545454" stroke-width="1.6"/><path d="M1216 386 a3.5 8 0 1 0 1 17" fill="none" stroke="#545454" stroke-width="1.6"/><polygon points="1217,384 1222,386 1221,392" fill="#545454"/><path d="M1249.2 379V395.5L1237.7 407" stroke="#545454" stroke-width="2" fill="none"/><path d="M1250 395.5H1264" stroke="#c51f3e" stroke-width="1.8" stroke-dasharray="3 2"/><path d="M1237 381.8l7 8M1244 381.8l-7 8" stroke="#545454" stroke-width="1.6"/><path d="M1257 386 a3.5 8 0 1 0 1 17" fill="none" stroke="#545454" stroke-width="1.6"/><polygon points="1258,406 1263,399 1263.5,406" fill="#545454"/><path d="M1299.4 379.5V395.75H1313.75" stroke="#545454" stroke-width="2" fill="none"/><path d="M1287.5 407L1296 400" stroke="#c51f3e" stroke-width="2.2"/><path d="M1304 382l3.5 4.5l3.5-4.5M1307.5 386.5v4.5" stroke="#545454" stroke-width="1.8" fill="none"/><ellipse cx="1294" cy="398" rx="9" ry="4" transform="rotate(45 1294 398)" fill="none" stroke="#545454" stroke-width="1.6"/><polygon points="1295,408 1300,405 1299,409" fill="#545454"/><path d="M1340.4 379.5V395.75H1354.75" stroke="#545454" stroke-width="2" fill="none"/><path d="M1328.5 407L1337 400" stroke="#c51f3e" stroke-width="2.2"/><path d="M1345 382l3.5 4.5l3.5-4.5M1348.5 386.5v4.5" stroke="#545454" stroke-width="1.8" fill="none"/><ellipse cx="1335" cy="398" rx="9" ry="4" transform="rotate(45 1335 398)" fill="none" stroke="#545454" stroke-width="1.6"/><polygon points="1327,398 1332,393 1333,399" fill="#545454"/><path d="M1405 395.75H1391L1380 407" stroke="#545454" stroke-width="2" fill="none"/><path d="M1391 379.5V395.75" stroke="#c51f3e" stroke-width="1.8"/><path d="M1392 399.5h6l-6 8h6" stroke="#545454" stroke-width="1.8" fill="none"/><ellipse cx="1391" cy="388" rx="10" ry="4" fill="none" stroke="#545454" stroke-width="1.6"/><polygon points="1386,382 1380,383 1386,388" fill="#545454"/><path d="M1446 395.75H1432L1421 407" stroke="#545454" stroke-width="2" fill="none"/><path d="M1432 379.5V395.75" stroke="#c51f3e" stroke-width="1.8"/><path d="M1433 399.5h6l-6 8h6" stroke="#545454" stroke-width="1.8" fill="none"/><ellipse cx="1432" cy="388" rx="10" ry="4" fill="none" stroke="#545454" stroke-width="1.6"/><polygon points="1437,382 1443,383 1437,388" fill="#545454"/><polygon points="1477,380.75 1493,384.5 1493,405.75 1477,408.25" fill="#1b80c8"/><path d="M1475 382h-4.5v5M1470.5 391v4M1470.5 399v6.5h4.5" stroke="#545454" stroke-width="1.3" fill="none"/><path d="M1476 387a5 5 0 0 0 -2 12h7" stroke="#545454" stroke-width="1.3" fill="none"/><polygon points="1484,399 1479,396.5 1479,401.5" fill="#545454"/><polygon points="1517.7,394.5 1529,381.1 1529,389.6 1545.9,389.6 1545.9,399.4 1529,399.4 1529,407.9" fill="#1b80c8"/><polygon points="1585.9,394.5 1574.7,381.1 1574.7,389.6 1558.5,389.6 1558.5,399.4 1574.7,399.4 1574.7,407.9" fill="#1b80c8"/><polygon points="1613.4,381.1 1626.7,392.4 1618.3,392.4 1618.3,408.6 1608.4,408.6 1608.4,392.4 1600,392.4" fill="#1b80c8"/><polygon points="1654.1,407.9 1668.2,396.6 1659,396.6 1659,380.4 1649.2,380.4 1649.2,396.6 1640.8,396.6" fill="#1b80c8"/><polygon points="1704.4,379.5 1718.5,387 1718.5,401.5 1704.4,409 1690.3,401.5 1690.3,387" fill="#a9a9a9" stroke="#545454" stroke-width="1"/><polygon points="1704.4,379.5 1718.5,387 1704.4,394.5 1690.3,387" fill="#d0d0d0" stroke="#545454" stroke-width="1"/><path d="M1704.4 394.5V409" stroke="#545454" stroke-width="1"/><path d="M1704.4 382v4M1696 399l3-1.5M1713 399l-3-1.5" stroke="#888" stroke-width="0.6"/><polygon points="1754,408 1766,397.5 1754,393 1742,397.5" fill="#f0950a"/><polygon points="1754,404.5 1766,394 1754,389.5 1742,394" fill="#545454"/><polygon points="1754,400.5 1766,390.5 1754,381 1742,390.5" fill="#1b80c8"/></g></svg>
<div class="a" style="left:860px;top:416px;width:936px;height:37px;background:#ffffe1;"></div>
<svg style="left:867px;top:423.5px;" width="22" height="21" viewBox="0 0 22 21"><polygon points="11,1.5 21,19.5 1,19.5" fill="#ffdc00" stroke="#ffae00" stroke-width="1.2" stroke-linejoin="round"/><rect x="10" y="8" width="2.2" height="7" rx="1" fill="#000"/><rect x="10" y="16" width="2.2" height="2" fill="#000"/></svg>
<div class="t" style="left:897px;top:427px;font-size:15px;color:#000;">电路板缺少外框或外框形状异常 (如板外框线条没有闭合)。可以通过设计规则检查 (DRC) 来分析原因。</div>
<svg style="left:1773px;top:424px;" width="20" height="20" viewBox="0 0 20 20"><defs><linearGradient id="xg" x1="0" y1="0" x2="0" y2="1"><stop offset="0" stop-color="#eab0a8"/><stop offset=".45" stop-color="#e08878"/><stop offset=".5" stop-color="#c84a38"/><stop offset="1" stop-color="#d87060"/></linearGradient></defs><rect x="0.5" y="0.5" width="19" height="19" rx="2" fill="url(#xg)" stroke="#5a2020"/><path d="M5.5 5.5L14.5 14.5M14.5 5.5L5.5 14.5" stroke="#fff" stroke-width="3" stroke-linecap="round"/></svg>
<div class="a" style="left:860px;top:453px;width:936px;height:417px;background:linear-gradient(#cccce6,#666680);border-top:1px solid #a0a0a0;border-left:1px solid #a0a0a0"></div>
<svg style="left:0px;top:0px;left:0;top:0;clip-path:inset(453px 124px 172px 860px)" width="1920" height="1042" viewBox="0 0 1920 1042"><polygon points="1232.0,807.0 1488.0,759.5 1479.7,771.8 1234.0,818.0" fill="#3a3020"/><polygon points="1206.0,573.0 1415.0,547.0 1488.0,759.5 1232.0,807.0" fill="#1c3223"/><polygon points="1308.0,755.0 1340.0,750.0 1341.0,756.0 1309.0,761.0" fill="#f4f4f4"/><polygon points="1372.0,744.0 1403.0,739.5 1404.0,745.0 1373.0,749.0" fill="#f4f4f4"/><rect x="1271" y="762" width="4" height="3" fill="#f4f4f4"/><rect x="1433" y="735" width="4" height="3" fill="#f4f4f4"/><path d="M1218 676 Q1232 712 1266 731" stroke="#f8f8f8" stroke-width="3.2" fill="none"/><polygon points="1265.0,720.0 1445.0,690.0 1443.0,721.0 1269.0,752.0" fill="#fffbe6"/><polygon points="1269.0,752.0 1443.0,721.0 1443.0,733.0 1272.0,766.0" fill="#b9a28a"/><polygon points="1265.0,720.0 1281.0,717.0 1283.0,750.0 1269.0,753.0" fill="#fffde8"/><polygon points="1456.0,644.7 1448.2,649.3 1455.6,654.0 1447.2,658.0 1453.9,663.3 1445.0,666.7 1450.9,672.4 1441.7,675.1 1446.8,681.3 1437.2,683.2 1441.4,689.8 1431.7,691.0 1434.9,697.9 1425.1,698.4 1427.4,705.4 1417.5,705.2 1418.8,712.4 1409.1,711.5 1409.4,718.7 1399.8,717.1 1399.1,724.3 1389.9,721.9 1388.2,729.1 1379.3,726.1 1376.7,733.1 1368.2,729.4 1364.7,736.2 1356.8,731.9 1352.3,738.4 1345.1,733.5 1339.7,739.7 1333.3,734.3 1327.1,740.0 1321.4,734.1 1314.5,739.4 1309.6,733.1 1302.0,737.9 1298.1,731.2 1289.9,735.4 1286.9,728.5 1278.1,732.0 1276.1,724.9 1266.9,727.8 1265.9,720.6 1256.4,722.7 1256.4,715.5 1246.7,716.9 1247.6,709.7 1237.8,710.4 1239.7,703.2 1229.8,703.2 1232.7,696.2 1222.9,695.5 1226.8,688.7 1217.1,687.3 1221.9,680.8 1212.5,678.7 1218.1,672.6 1209.1,669.7 1215.5,664.1 1206.9,660.6 1214.1,655.4 1206.0,651.3 1213.8,646.7 1206.4,642.0 1214.8,638.0 1208.1,632.7 1217.0,629.3 1211.1,623.6 1220.3,620.9 1215.2,614.7 1224.8,612.8 1220.6,606.2 1230.3,605.0 1227.1,598.1 1236.9,597.6 1234.6,590.6 1244.5,590.8 1243.2,583.6 1252.9,584.5 1252.6,577.3 1262.2,578.9 1262.9,571.7 1272.1,574.1 1273.8,566.9 1282.7,569.9 1285.3,562.9 1293.8,566.6 1297.3,559.8 1305.2,564.1 1309.7,557.6 1316.9,562.5 1322.3,556.3 1328.7,561.7 1334.9,556.0 1340.6,561.9 1347.5,556.6 1352.4,562.9 1360.0,558.1 1363.9,564.8 1372.1,560.6 1375.1,567.5 1383.9,564.0 1385.9,571.1 1395.1,568.2 1396.1,575.4 1405.6,573.3 1405.6,580.5 1415.3,579.1 1414.4,586.3 1424.2,585.6 1422.3,592.8 1432.2,592.8 1429.3,599.8 1439.1,600.5 1435.2,607.3 1444.9,608.7 1440.1,615.2 1449.5,617.3 1443.9,623.4 1452.9,626.3 1446.5,631.9 1455.1,635.4 1447.9,640.6" fill="#1e1e1e"/><polygon points="1456.0,642.7 1448.2,647.3 1455.6,652.0 1447.2,656.0 1453.9,661.3 1445.0,664.7 1450.9,670.4 1441.7,673.1 1446.8,679.3 1437.2,681.2 1441.4,687.8 1431.7,689.0 1434.9,695.9 1425.1,696.4 1427.4,703.4 1417.5,703.2 1418.8,710.4 1409.1,709.5 1409.4,716.7 1399.8,715.1 1399.1,722.3 1389.9,719.9 1388.2,727.1 1379.3,724.1 1376.7,731.1 1368.2,727.4 1364.7,734.2 1356.8,729.9 1352.3,736.4 1345.1,731.5 1339.7,737.7 1333.3,732.3 1327.1,738.0 1321.4,732.1 1314.5,737.4 1309.6,731.1 1302.0,735.9 1298.1,729.2 1289.9,733.4 1286.9,726.5 1278.1,730.0 1276.1,722.9 1266.9,725.8 1265.9,718.6 1256.4,720.7 1256.4,713.5 1246.7,714.9 1247.6,707.7 1237.8,708.4 1239.7,701.2 1229.8,701.2 1232.7,694.2 1222.9,693.5 1226.8,686.7 1217.1,685.3 1221.9,678.8 1212.5,676.7 1218.1,670.6 1209.1,667.7 1215.5,662.1 1206.9,658.6 1214.1,653.4 1206.0,649.3 1213.8,644.7 1206.4,640.0 1214.8,636.0 1208.1,630.7 1217.0,627.3 1211.1,621.6 1220.3,618.9 1215.2,612.7 1224.8,610.8 1220.6,604.2 1230.3,603.0 1227.1,596.1 1236.9,595.6 1234.6,588.6 1244.5,588.8 1243.2,581.6 1252.9,582.5 1252.6,575.3 1262.2,576.9 1262.9,569.7 1272.1,572.1 1273.8,564.9 1282.7,567.9 1285.3,560.9 1293.8,564.6 1297.3,557.8 1305.2,562.1 1309.7,555.6 1316.9,560.5 1322.3,554.3 1328.7,559.7 1334.9,554.0 1340.6,559.9 1347.5,554.6 1352.4,560.9 1360.0,556.1 1363.9,562.8 1372.1,558.6 1375.1,565.5 1383.9,562.0 1385.9,569.1 1395.1,566.2 1396.1,573.4 1405.6,571.3 1405.6,578.5 1415.3,577.1 1414.4,584.3 1424.2,583.6 1422.3,590.8 1432.2,590.8 1429.3,597.8 1439.1,598.5 1435.2,605.3 1444.9,606.7 1440.1,613.2 1449.5,615.3 1443.9,621.4 1452.9,624.3 1446.5,629.9 1455.1,633.4 1447.9,638.6" fill="#1e1e1e"/><polygon points="1456.0,640.7 1448.2,645.3 1455.6,650.0 1447.2,654.0 1453.9,659.3 1445.0,662.7 1450.9,668.4 1441.7,671.1 1446.8,677.3 1437.2,679.2 1441.4,685.8 1431.7,687.0 1434.9,693.9 1425.1,694.4 1427.4,701.4 1417.5,701.2 1418.8,708.4 1409.1,707.5 1409.4,714.7 1399.8,713.1 1399.1,720.3 1389.9,717.9 1388.2,725.1 1379.3,722.1 1376.7,729.1 1368.2,725.4 1364.7,732.2 1356.8,727.9 1352.3,734.4 1345.1,729.5 1339.7,735.7 1333.3,730.3 1327.1,736.0 1321.4,730.1 1314.5,735.4 1309.6,729.1 1302.0,733.9 1298.1,727.2 1289.9,731.4 1286.9,724.5 1278.1,728.0 1276.1,720.9 1266.9,723.8 1265.9,716.6 1256.4,718.7 1256.4,711.5 1246.7,712.9 1247.6,705.7 1237.8,706.4 1239.7,699.2 1229.8,699.2 1232.7,692.2 1222.9,691.5 1226.8,684.7 1217.1,683.3 1221.9,676.8 1212.5,674.7 1218.1,668.6 1209.1,665.7 1215.5,660.1 1206.9,656.6 1214.1,651.4 1206.0,647.3 1213.8,642.7 1206.4,638.0 1214.8,634.0 1208.1,628.7 1217.0,625.3 1211.1,619.6 1220.3,616.9 1215.2,610.7 1224.8,608.8 1220.6,602.2 1230.3,601.0 1227.1,594.1 1236.9,593.6 1234.6,586.6 1244.5,586.8 1243.2,579.6 1252.9,580.5 1252.6,573.3 1262.2,574.9 1262.9,567.7 1272.1,570.1 1273.8,562.9 1282.7,565.9 1285.3,558.9 1293.8,562.6 1297.3,555.8 1305.2,560.1 1309.7,553.6 1316.9,558.5 1322.3,552.3 1328.7,557.7 1334.9,552.0 1340.6,557.9 1347.5,552.6 1352.4,558.9 1360.0,554.1 1363.9,560.8 1372.1,556.6 1375.1,563.5 1383.9,560.0 1385.9,567.1 1395.1,564.2 1396.1,571.4 1405.6,569.3 1405.6,576.5 1415.3,575.1 1414.4,582.3 1424.2,581.6 1422.3,588.8 1432.2,588.8 1429.3,595.8 1439.1,596.5 1435.2,603.3 1444.9,604.7 1440.1,611.2 1449.5,613.3 1443.9,619.4 1452.9,622.3 1446.5,627.9 1455.1,631.4 1447.9,636.6" fill="#1e1e1e"/><polygon points="1456.0,638.7 1448.2,643.3 1455.6,648.0 1447.2,652.0 1453.9,657.3 1445.0,660.7 1450.9,666.4 1441.7,669.1 1446.8,675.3 1437.2,677.2 1441.4,683.8 1431.7,685.0 1434.9,691.9 1425.1,692.4 1427.4,699.4 1417.5,699.2 1418.8,706.4 1409.1,705.5 1409.4,712.7 1399.8,711.1 1399.1,718.3 1389.9,715.9 1388.2,723.1 1379.3,720.1 1376.7,727.1 1368.2,723.4 1364.7,730.2 1356.8,725.9 1352.3,732.4 1345.1,727.5 1339.7,733.7 1333.3,728.3 1327.1,734.0 1321.4,728.1 1314.5,733.4 1309.6,727.1 1302.0,731.9 1298.1,725.2 1289.9,729.4 1286.9,722.5 1278.1,726.0 1276.1,718.9 1266.9,721.8 1265.9,714.6 1256.4,716.7 1256.4,709.5 1246.7,710.9 1247.6,703.7 1237.8,704.4 1239.7,697.2 1229.8,697.2 1232.7,690.2 1222.9,689.5 1226.8,682.7 1217.1,681.3 1221.9,674.8 1212.5,672.7 1218.1,666.6 1209.1,663.7 1215.5,658.1 1206.9,654.6 1214.1,649.4 1206.0,645.3 1213.8,640.7 1206.4,636.0 1214.8,632.0 1208.1,626.7 1217.0,623.3 1211.1,617.6 1220.3,614.9 1215.2,608.7 1224.8,606.8 1220.6,600.2 1230.3,599.0 1227.1,592.1 1236.9,591.6 1234.6,584.6 1244.5,584.8 1243.2,577.6 1252.9,578.5 1252.6,571.3 1262.2,572.9 1262.9,565.7 1272.1,568.1 1273.8,560.9 1282.7,563.9 1285.3,556.9 1293.8,560.6 1297.3,553.8 1305.2,558.1 1309.7,551.6 1316.9,556.5 1322.3,550.3 1328.7,555.7 1334.9,550.0 1340.6,555.9 1347.5,550.6 1352.4,556.9 1360.0,552.1 1363.9,558.8 1372.1,554.6 1375.1,561.5 1383.9,558.0 1385.9,565.1 1395.1,562.2 1396.1,569.4 1405.6,567.3 1405.6,574.5 1415.3,573.1 1414.4,580.3 1424.2,579.6 1422.3,586.8 1432.2,586.8 1429.3,593.8 1439.1,594.5 1435.2,601.3 1444.9,602.7 1440.1,609.2 1449.5,611.3 1443.9,617.4 1452.9,620.3 1446.5,625.9 1455.1,629.4 1447.9,634.6" fill="#1e1e1e"/><polygon points="1456.0,636.7 1448.2,641.3 1455.6,646.0 1447.2,650.0 1453.9,655.3 1445.0,658.7 1450.9,664.4 1441.7,667.1 1446.8,673.3 1437.2,675.2 1441.4,681.8 1431.7,683.0 1434.9,689.9 1425.1,690.4 1427.4,697.4 1417.5,697.2 1418.8,704.4 1409.1,703.5 1409.4,710.7 1399.8,709.1 1399.1,716.3 1389.9,713.9 1388.2,721.1 1379.3,718.1 1376.7,725.1 1368.2,721.4 1364.7,728.2 1356.8,723.9 1352.3,730.4 1345.1,725.5 1339.7,731.7 1333.3,726.3 1327.1,732.0 1321.4,726.1 1314.5,731.4 1309.6,725.1 1302.0,729.9 1298.1,723.2 1289.9,727.4 1286.9,720.5 1278.1,724.0 1276.1,716.9 1266.9,719.8 1265.9,712.6 1256.4,714.7 1256.4,707.5 1246.7,708.9 1247.6,701.7 1237.8,702.4 1239.7,695.2 1229.8,695.2 1232.7,688.2 1222.9,687.5 1226.8,680.7 1217.1,679.3 1221.9,672.8 1212.5,670.7 1218.1,664.6 1209.1,661.7 1215.5,656.1 1206.9,652.6 1214.1,647.4 1206.0,643.3 1213.8,638.7 1206.4,634.0 1214.8,630.0 1208.1,624.7 1217.0,621.3 1211.1,615.6 1220.3,612.9 1215.2,606.7 1224.8,604.8 1220.6,598.2 1230.3,597.0 1227.1,590.1 1236.9,589.6 1234.6,582.6 1244.5,582.8 1243.2,575.6 1252.9,576.5 1252.6,569.3 1262.2,570.9 1262.9,563.7 1272.1,566.1 1273.8,558.9 1282.7,561.9 1285.3,554.9 1293.8,558.6 1297.3,551.8 1305.2,556.1 1309.7,549.6 1316.9,554.5 1322.3,548.3 1328.7,553.7 1334.9,548.0 1340.6,553.9 1347.5,548.6 1352.4,554.9 1360.0,550.1 1363.9,556.8 1372.1,552.6 1375.1,559.5 1383.9,556.0 1385.9,563.1 1395.1,560.2 1396.1,567.4 1405.6,565.3 1405.6,572.5 1415.3,571.1 1414.4,578.3 1424.2,577.6 1422.3,584.8 1432.2,584.8 1429.3,591.8 1439.1,592.5 1435.2,599.3 1444.9,600.7 1440.1,607.2 1449.5,609.3 1443.9,615.4 1452.9,618.3 1446.5,623.9 1455.1,627.4 1447.9,632.6" fill="#1e1e1e"/><polygon points="1456.0,634.7 1448.2,639.3 1455.6,644.0 1447.2,648.0 1453.9,653.3 1445.0,656.7 1450.9,662.4 1441.7,665.1 1446.8,671.3 1437.2,673.2 1441.4,679.8 1431.7,681.0 1434.9,687.9 1425.1,688.4 1427.4,695.4 1417.5,695.2 1418.8,702.4 1409.1,701.5 1409.4,708.7 1399.8,707.1 1399.1,714.3 1389.9,711.9 1388.2,719.1 1379.3,716.1 1376.7,723.1 1368.2,719.4 1364.7,726.2 1356.8,721.9 1352.3,728.4 1345.1,723.5 1339.7,729.7 1333.3,724.3 1327.1,730.0 1321.4,724.1 1314.5,729.4 1309.6,723.1 1302.0,727.9 1298.1,721.2 1289.9,725.4 1286.9,718.5 1278.1,722.0 1276.1,714.9 1266.9,717.8 1265.9,710.6 1256.4,712.7 1256.4,705.5 1246.7,706.9 1247.6,699.7 1237.8,700.4 1239.7,693.2 1229.8,693.2 1232.7,686.2 1222.9,685.5 1226.8,678.7 1217.1,677.3 1221.9,670.8 1212.5,668.7 1218.1,662.6 1209.1,659.7 1215.5,654.1 1206.9,650.6 1214.1,645.4 1206.0,641.3 1213.8,636.7 1206.4,632.0 1214.8,628.0 1208.1,622.7 1217.0,619.3 1211.1,613.6 1220.3,610.9 1215.2,604.7 1224.8,602.8 1220.6,596.2 1230.3,595.0 1227.1,588.1 1236.9,587.6 1234.6,580.6 1244.5,580.8 1243.2,573.6 1252.9,574.5 1252.6,567.3 1262.2,568.9 1262.9,561.7 1272.1,564.1 1273.8,556.9 1282.7,559.9 1285.3,552.9 1293.8,556.6 1297.3,549.8 1305.2,554.1 1309.7,547.6 1316.9,552.5 1322.3,546.3 1328.7,551.7 1334.9,546.0 1340.6,551.9 1347.5,546.6 1352.4,552.9 1360.0,548.1 1363.9,554.8 1372.1,550.6 1375.1,557.5 1383.9,554.0 1385.9,561.1 1395.1,558.2 1396.1,565.4 1405.6,563.3 1405.6,570.5 1415.3,569.1 1414.4,576.3 1424.2,575.6 1422.3,582.8 1432.2,582.8 1429.3,589.8 1439.1,590.5 1435.2,597.3 1444.9,598.7 1440.1,605.2 1449.5,607.3 1443.9,613.4 1452.9,616.3 1446.5,621.9 1455.1,625.4 1447.9,630.6" fill="#1e1e1e"/><polygon points="1456.0,632.7 1448.2,637.3 1455.6,642.0 1447.2,646.0 1453.9,651.3 1445.0,654.7 1450.9,660.4 1441.7,663.1 1446.8,669.3 1437.2,671.2 1441.4,677.8 1431.7,679.0 1434.9,685.9 1425.1,686.4 1427.4,693.4 1417.5,693.2 1418.8,700.4 1409.1,699.5 1409.4,706.7 1399.8,705.1 1399.1,712.3 1389.9,709.9 1388.2,717.1 1379.3,714.1 1376.7,721.1 1368.2,717.4 1364.7,724.2 1356.8,719.9 1352.3,726.4 1345.1,721.5 1339.7,727.7 1333.3,722.3 1327.1,728.0 1321.4,722.1 1314.5,727.4 1309.6,721.1 1302.0,725.9 1298.1,719.2 1289.9,723.4 1286.9,716.5 1278.1,720.0 1276.1,712.9 1266.9,715.8 1265.9,708.6 1256.4,710.7 1256.4,703.5 1246.7,704.9 1247.6,697.7 1237.8,698.4 1239.7,691.2 1229.8,691.2 1232.7,684.2 1222.9,683.5 1226.8,676.7 1217.1,675.3 1221.9,668.8 1212.5,666.7 1218.1,660.6 1209.1,657.7 1215.5,652.1 1206.9,648.6 1214.1,643.4 1206.0,639.3 1213.8,634.7 1206.4,630.0 1214.8,626.0 1208.1,620.7 1217.0,617.3 1211.1,611.6 1220.3,608.9 1215.2,602.7 1224.8,600.8 1220.6,594.2 1230.3,593.0 1227.1,586.1 1236.9,585.6 1234.6,578.6 1244.5,578.8 1243.2,571.6 1252.9,572.5 1252.6,565.3 1262.2,566.9 1262.9,559.7 1272.1,562.1 1273.8,554.9 1282.7,557.9 1285.3,550.9 1293.8,554.6 1297.3,547.8 1305.2,552.1 1309.7,545.6 1316.9,550.5 1322.3,544.3 1328.7,549.7 1334.9,544.0 1340.6,549.9 1347.5,544.6 1352.4,550.9 1360.0,546.1 1363.9,552.8 1372.1,548.6 1375.1,555.5 1383.9,552.0 1385.9,559.1 1395.1,556.2 1396.1,563.4 1405.6,561.3 1405.6,568.5 1415.3,567.1 1414.4,574.3 1424.2,573.6 1422.3,580.8 1432.2,580.8 1429.3,587.8 1439.1,588.5 1435.2,595.3 1444.9,596.7 1440.1,603.2 1449.5,605.3 1443.9,611.4 1452.9,614.3 1446.5,619.9 1455.1,623.4 1447.9,628.6" fill="#1e1e1e"/><polygon points="1456.0,630.7 1448.2,635.3 1455.6,640.0 1447.2,644.0 1453.9,649.3 1445.0,652.7 1450.9,658.4 1441.7,661.1 1446.8,667.3 1437.2,669.2 1441.4,675.8 1431.7,677.0 1434.9,683.9 1425.1,684.4 1427.4,691.4 1417.5,691.2 1418.8,698.4 1409.1,697.5 1409.4,704.7 1399.8,703.1 1399.1,710.3 1389.9,707.9 1388.2,715.1 1379.3,712.1 1376.7,719.1 1368.2,715.4 1364.7,722.2 1356.8,717.9 1352.3,724.4 1345.1,719.5 1339.7,725.7 1333.3,720.3 1327.1,726.0 1321.4,720.1 1314.5,725.4 1309.6,719.1 1302.0,723.9 1298.1,717.2 1289.9,721.4 1286.9,714.5 1278.1,718.0 1276.1,710.9 1266.9,713.8 1265.9,706.6 1256.4,708.7 1256.4,701.5 1246.7,702.9 1247.6,695.7 1237.8,696.4 1239.7,689.2 1229.8,689.2 1232.7,682.2 1222.9,681.5 1226.8,674.7 1217.1,673.3 1221.9,666.8 1212.5,664.7 1218.1,658.6 1209.1,655.7 1215.5,650.1 1206.9,646.6 1214.1,641.4 1206.0,637.3 1213.8,632.7 1206.4,628.0 1214.8,624.0 1208.1,618.7 1217.0,615.3 1211.1,609.6 1220.3,606.9 1215.2,600.7 1224.8,598.8 1220.6,592.2 1230.3,591.0 1227.1,584.1 1236.9,583.6 1234.6,576.6 1244.5,576.8 1243.2,569.6 1252.9,570.5 1252.6,563.3 1262.2,564.9 1262.9,557.7 1272.1,560.1 1273.8,552.9 1282.7,555.9 1285.3,548.9 1293.8,552.6 1297.3,545.8 1305.2,550.1 1309.7,543.6 1316.9,548.5 1322.3,542.3 1328.7,547.7 1334.9,542.0 1340.6,547.9 1347.5,542.6 1352.4,548.9 1360.0,544.1 1363.9,550.8 1372.1,546.6 1375.1,553.5 1383.9,550.0 1385.9,557.1 1395.1,554.2 1396.1,561.4 1405.6,559.3 1405.6,566.5 1415.3,565.1 1414.4,572.3 1424.2,571.6 1422.3,578.8 1432.2,578.8 1429.3,585.8 1439.1,586.5 1435.2,593.3 1444.9,594.7 1440.1,601.2 1449.5,603.3 1443.9,609.4 1452.9,612.3 1446.5,617.9 1455.1,621.4 1447.9,626.6" fill="#1e1e1e"/><polygon points="1456.0,628.7 1448.2,633.3 1455.6,638.0 1447.2,642.0 1453.9,647.3 1445.0,650.7 1450.9,656.4 1441.7,659.1 1446.8,665.3 1437.2,667.2 1441.4,673.8 1431.7,675.0 1434.9,681.9 1425.1,682.4 1427.4,689.4 1417.5,689.2 1418.8,696.4 1409.1,695.5 1409.4,702.7 1399.8,701.1 1399.1,708.3 1389.9,705.9 1388.2,713.1 1379.3,710.1 1376.7,717.1 1368.2,713.4 1364.7,720.2 1356.8,715.9 1352.3,722.4 1345.1,717.5 1339.7,723.7 1333.3,718.3 1327.1,724.0 1321.4,718.1 1314.5,723.4 1309.6,717.1 1302.0,721.9 1298.1,715.2 1289.9,719.4 1286.9,712.5 1278.1,716.0 1276.1,708.9 1266.9,711.8 1265.9,704.6 1256.4,706.7 1256.4,699.5 1246.7,700.9 1247.6,693.7 1237.8,694.4 1239.7,687.2 1229.8,687.2 1232.7,680.2 1222.9,679.5 1226.8,672.7 1217.1,671.3 1221.9,664.8 1212.5,662.7 1218.1,656.6 1209.1,653.7 1215.5,648.1 1206.9,644.6 1214.1,639.4 1206.0,635.3 1213.8,630.7 1206.4,626.0 1214.8,622.0 1208.1,616.7 1217.0,613.3 1211.1,607.6 1220.3,604.9 1215.2,598.7 1224.8,596.8 1220.6,590.2 1230.3,589.0 1227.1,582.1 1236.9,581.6 1234.6,574.6 1244.5,574.8 1243.2,567.6 1252.9,568.5 1252.6,561.3 1262.2,562.9 1262.9,555.7 1272.1,558.1 1273.8,550.9 1282.7,553.9 1285.3,546.9 1293.8,550.6 1297.3,543.8 1305.2,548.1 1309.7,541.6 1316.9,546.5 1322.3,540.3 1328.7,545.7 1334.9,540.0 1340.6,545.9 1347.5,540.6 1352.4,546.9 1360.0,542.1 1363.9,548.8 1372.1,544.6 1375.1,551.5 1383.9,548.0 1385.9,555.1 1395.1,552.2 1396.1,559.4 1405.6,557.3 1405.6,564.5 1415.3,563.1 1414.4,570.3 1424.2,569.6 1422.3,576.8 1432.2,576.8 1429.3,583.8 1439.1,584.5 1435.2,591.3 1444.9,592.7 1440.1,599.2 1449.5,601.3 1443.9,607.4 1452.9,610.3 1446.5,615.9 1455.1,619.4 1447.9,624.6" fill="#262626"/><path d="M1450.9 654.4v17M1446.8 663.3v17M1441.4 671.8v17M1434.9 679.9v17M1427.4 687.4v17M1418.8 694.4v17M1409.4 700.7v17M1399.1 706.3v17M1388.2 711.1v17M1376.7 715.1v17M1364.7 718.2v17M1352.3 720.4v17M1339.7 721.7v17M1327.1 722.0v17M1314.5 721.4v17M1302.0 719.9v17M1289.9 717.4v17M1278.1 714.0v17M1266.9 709.8v17M1256.4 704.7v17M1246.7 698.9v17M1237.8 692.4v17M1229.8 685.2v17M1222.9 677.5v17M1217.1 669.3v17M1212.5 660.7v17M1209.1 651.7v17" stroke="#383838" stroke-width="1.2"/><polygon points="1456.0,626.7 1448.2,631.3 1455.6,636.0 1447.2,640.0 1453.9,645.3 1445.0,648.7 1450.9,654.4 1441.7,657.1 1446.8,663.3 1437.2,665.2 1441.4,671.8 1431.7,673.0 1434.9,679.9 1425.1,680.4 1427.4,687.4 1417.5,687.2 1418.8,694.4 1409.1,693.5 1409.4,700.7 1399.8,699.1 1399.1,706.3 1389.9,703.9 1388.2,711.1 1379.3,708.1 1376.7,715.1 1368.2,711.4 1364.7,718.2 1356.8,713.9 1352.3,720.4 1345.1,715.5 1339.7,721.7 1333.3,716.3 1327.1,722.0 1321.4,716.1 1314.5,721.4 1309.6,715.1 1302.0,719.9 1298.1,713.2 1289.9,717.4 1286.9,710.5 1278.1,714.0 1276.1,706.9 1266.9,709.8 1265.9,702.6 1256.4,704.7 1256.4,697.5 1246.7,698.9 1247.6,691.7 1237.8,692.4 1239.7,685.2 1229.8,685.2 1232.7,678.2 1222.9,677.5 1226.8,670.7 1217.1,669.3 1221.9,662.8 1212.5,660.7 1218.1,654.6 1209.1,651.7 1215.5,646.1 1206.9,642.6 1214.1,637.4 1206.0,633.3 1213.8,628.7 1206.4,624.0 1214.8,620.0 1208.1,614.7 1217.0,611.3 1211.1,605.6 1220.3,602.9 1215.2,596.7 1224.8,594.8 1220.6,588.2 1230.3,587.0 1227.1,580.1 1236.9,579.6 1234.6,572.6 1244.5,572.8 1243.2,565.6 1252.9,566.5 1252.6,559.3 1262.2,560.9 1262.9,553.7 1272.1,556.1 1273.8,548.9 1282.7,551.9 1285.3,544.9 1293.8,548.6 1297.3,541.8 1305.2,546.1 1309.7,539.6 1316.9,544.5 1322.3,538.3 1328.7,543.7 1334.9,538.0 1340.6,543.9 1347.5,538.6 1352.4,544.9 1360.0,540.1 1363.9,546.8 1372.1,542.6 1375.1,549.5 1383.9,546.0 1385.9,553.1 1395.1,550.2 1396.1,557.4 1405.6,555.3 1405.6,562.5 1415.3,561.1 1414.4,568.3 1424.2,567.6 1422.3,574.8 1432.2,574.8 1429.3,581.8 1439.1,582.5 1435.2,589.3 1444.9,590.7 1440.1,597.2 1449.5,599.3 1443.9,605.4 1452.9,608.3 1446.5,613.9 1455.1,617.4 1447.9,622.6" fill="#4a4a4a"/><path d="M1231 645 A101 88 0 0 1 1433 645" fill="none" stroke="#1c1c1c" stroke-width="3"/><path d="M1316 581.5 L1328 580 L1337 612" fill="none" stroke="#1c1c1c" stroke-width="2.2"/><path d="M1316 580.5h11" stroke="#1c1c1c" stroke-width="3"/><ellipse cx="1331" cy="626" rx="16" ry="12" fill="#262626"/><ellipse cx="1331" cy="624.5" rx="14" ry="10" fill="#f2f2f2"/><ellipse cx="1331" cy="623.5" rx="6" ry="4" fill="#cfcfcf"/><g transform="rotate(-10 1330 672)" fill="none" stroke="#f4f4f4" stroke-width="2.2" stroke-linecap="round"><path d="M1318 678 h-8 a5 5 0 0 1 -1 -9.5 a8 8 0 0 1 15 -3 a6 6 0 0 1 10 5 a4 4 0 0 1 -2 7.5 h-3"/><circle cx="1314" cy="676" r="2.4" stroke-width="1.8"/><path d="M1316.5 674.5 L1324 670" stroke-width="2"/></g><g transform="rotate(-10 1342 662)"><text x="1342" y="664" font-size="10.5" fill="#f4f4f4" font-family="Liberation Sans">LCEDA</text><text x="1342" y="676" font-size="10.5" fill="#f4f4f4" font-family="Liberation Sans">EasyEDA</text></g><ellipse cx="1291" cy="765" rx="10.5" ry="5.5" fill="#c9a800"/><rect x="1282" y="732" width="18" height="33" fill="#b8b8b8"/><rect x="1282" y="732" width="18" height="16.5" fill="#f8f8f8"/><ellipse cx="1291" cy="765" rx="9" ry="3" fill="#b0b0b0"/><ellipse cx="1357" cy="755" rx="10.5" ry="5.5" fill="#c9a800"/><rect x="1348" y="735" width="18" height="20" fill="#b8b8b8"/><rect x="1348" y="735" width="18" height="10.0" fill="#f8f8f8"/><ellipse cx="1357" cy="755" rx="9" ry="3" fill="#b0b0b0"/><ellipse cx="1421" cy="743" rx="10.5" ry="5.5" fill="#c9a800"/><rect x="1412" y="709" width="18" height="34" fill="#b8b8b8"/><rect x="1412" y="709" width="18" height="17.0" fill="#f8f8f8"/><ellipse cx="1421" cy="743" rx="9" ry="3" fill="#b0b0b0"/><path d="M890 840 L910 840" stroke="#e01010" stroke-width="2.5"/><polygon points="912,840 905,835 905,845" fill="#e01010"/><path d="M891 840 L891 826" stroke="#1010e0" stroke-width="3"/><polygon points="891,822 886,830 896,830" fill="#1010e0"/><circle cx="889" cy="838" r="3" fill="#10a010" opacity=".7"/></svg>
<div class="a" style="left:1796px;top:416px;width:6px;height:454px;background:#dadada;"></div>
<div class="a" style="left:1802px;top:416px;width:118px;height:454px;background:#f0f0f0;"></div>
<div class="a" style="left:1802px;top:416px;width:118px;height:26px;background:#bababa;"></div>
<div class="t" style="left:1806px;top:421px;font-size:15px;color:#000;">外观</div>
<div class="a" style="left:1812px;top:454px;width:18px;height:15px;background:#483f2c;"></div>
<svg style="left:1835px;top:453px;" width="16" height="16" viewBox="0 0 16 16"><circle cx="8" cy="8" r="8" fill="#5a5a5a"/><path d="M2.5 8Q8 2.5 13.5 8Q8 13.5 2.5 8z" fill="#fff"/><circle cx="8" cy="8" r="1.6" fill="none" stroke="#5a5a5a" stroke-width="1"/></svg>
<div class="t" style="left:1856px;top:454px;font-size:13.3px;color:#000;">电路板主体</div>
<div class="a" style="left:1812px;top:476px;width:18px;height:15px;background:#b39b00;"></div>
<svg style="left:1835px;top:475px;" width="16" height="16" viewBox="0 0 16 16"><circle cx="8" cy="8" r="8" fill="#5a5a5a"/><path d="M2.5 8Q8 2.5 13.5 8Q8 13.5 2.5 8z" fill="#fff"/><circle cx="8" cy="8" r="1.6" fill="none" stroke="#5a5a5a" stroke-width="1"/></svg>
<div class="t" style="left:1856px;top:477px;font-size:14px;color:#000;">F.Cu</div>
<div class="a" style="left:1812px;top:498px;width:18px;height:15px;background:#b39b00;"></div>
<svg style="left:1835px;top:497px;" width="16" height="16" viewBox="0 0 16 16"><circle cx="8" cy="8" r="8" fill="#5a5a5a"/><path d="M2.5 8Q8 2.5 13.5 8Q8 13.5 2.5 8z" fill="#fff"/><circle cx="8" cy="8" r="1.6" fill="none" stroke="#5a5a5a" stroke-width="1"/></svg>
<div class="t" style="left:1856px;top:499px;font-size:14px;color:#000;">B.Cu</div>
<svg style="left:1835px;top:519px;" width="16" height="16" viewBox="0 0 16 16"><circle cx="8" cy="8" r="8" fill="#5a5a5a"/><path d="M2.5 8Q8 2.5 13.5 8Q8 13.5 2.5 8z" fill="#fff"/><circle cx="8" cy="8" r="1.6" fill="none" stroke="#5a5a5a" stroke-width="1"/></svg>
<div class="t" style="left:1856px;top:521px;font-size:14px;color:#000;">Adhesive</div>
<div class="a" style="left:1812px;top:542px;width:18px;height:15px;background:#808080;"></div>
<svg style="left:1835px;top:541px;" width="16" height="16" viewBox="0 0 16 16"><circle cx="8" cy="8" r="8" fill="#5a5a5a"/><path d="M2.5 8Q8 2.5 13.5 8Q8 13.5 2.5 8z" fill="#fff"/><circle cx="8" cy="8" r="1.6" fill="none" stroke="#5a5a5a" stroke-width="1"/></svg>
<div class="t" style="left:1856px;top:543px;font-size:14px;color:#000;">Solder Paste</div>
<div class="a" style="left:1812px;top:564px;width:18px;height:15px;background:#e8e8e8;"></div>
<svg style="left:1835px;top:563px;" width="16" height="16" viewBox="0 0 16 16"><circle cx="8" cy="8" r="8" fill="#5a5a5a"/><path d="M2.5 8Q8 2.5 13.5 8Q8 13.5 2.5 8z" fill="#fff"/><circle cx="8" cy="8" r="1.6" fill="none" stroke="#5a5a5a" stroke-width="1"/></svg>
<div class="t" style="left:1856px;top:565px;font-size:14px;color:#000;">F.Silkscreen</div>
<div class="a" style="left:1812px;top:586px;width:18px;height:15px;background:#e8e8e8;"></div>
<svg style="left:1835px;top:585px;" width="16" height="16" viewBox="0 0 16 16"><circle cx="8" cy="8" r="8" fill="#5a5a5a"/><path d="M2.5 8Q8 2.5 13.5 8Q8 13.5 2.5 8z" fill="#fff"/><circle cx="8" cy="8" r="1.6" fill="none" stroke="#5a5a5a" stroke-width="1"/></svg>
<div class="t" style="left:1856px;top:587px;font-size:14px;color:#000;">B.Silkscreen</div>
<svg style="left:1812px;top:608px;" width="18" height="15" viewBox="0 0 18 15"><rect width="18" height="15" fill="#2f4b3d"/><rect x="0" y="0" width="7" height="7" fill="#28433a"/><rect x="7" y="7" width="7" height="8" fill="#28433a"/><rect x="14" y="0" width="4" height="7" fill="#28433a"/></svg>
<svg style="left:1835px;top:607px;" width="16" height="16" viewBox="0 0 16 16"><circle cx="8" cy="8" r="8" fill="#5a5a5a"/><path d="M2.5 8Q8 2.5 13.5 8Q8 13.5 2.5 8z" fill="#fff"/><circle cx="8" cy="8" r="1.6" fill="none" stroke="#5a5a5a" stroke-width="1"/></svg>
<div class="t" style="left:1856px;top:609px;font-size:14px;color:#000;">F.Mask</div>
<svg style="left:1812px;top:630px;" width="18" height="15" viewBox="0 0 18 15"><rect width="18" height="15" fill="#2f4b3d"/><rect x="0" y="0" width="7" height="7" fill="#28433a"/><rect x="7" y="7" width="7" height="8" fill="#28433a"/><rect x="14" y="0" width="4" height="7" fill="#28433a"/></svg>
<svg style="left:1835px;top:629px;" width="16" height="16" viewBox="0 0 16 16"><circle cx="8" cy="8" r="8" fill="#5a5a5a"/><path d="M2.5 8Q8 2.5 13.5 8Q8 13.5 2.5 8z" fill="#fff"/><circle cx="8" cy="8" r="1.6" fill="none" stroke="#5a5a5a" stroke-width="1"/></svg>
<div class="t" style="left:1856px;top:631px;font-size:14px;color:#000;">B.Mask</div>
<svg style="left:1812px;top:652px;" width="18" height="15" viewBox="0 0 18 15"><rect width="18" height="15" fill="#fff"/><rect x="0" y="0" width="7" height="7" fill="#d9d9d9"/><rect x="14" y="0" width="4" height="7" fill="#d9d9d9"/><rect x="7" y="7" width="7" height="8" fill="#d9d9d9"/></svg>
<svg style="left:1835px;top:651px;" width="16" height="16" viewBox="0 0 16 16"><circle cx="8" cy="8" r="8" fill="#5a5a5a"/><path d="M2.5 8Q8 2.5 13.5 8Q8 13.5 2.5 8z" fill="#fff"/><circle cx="8" cy="8" r="1.6" fill="none" stroke="#5a5a5a" stroke-width="1"/></svg>
<div class="t" style="left:1856px;top:653px;font-size:14px;color:#000;">User.Drawings</div>
<svg style="left:1812px;top:674px;" width="18" height="15" viewBox="0 0 18 15"><rect width="18" height="15" fill="#fff"/><rect x="0" y="0" width="7" height="7" fill="#d9d9d9"/><rect x="14" y="0" width="4" height="7" fill="#d9d9d9"/><rect x="7" y="7" width="7" height="8" fill="#d9d9d9"/></svg>
<svg style="left:1835px;top:673px;" width="16" height="16" viewBox="0 0 16 16"><circle cx="8" cy="8" r="8" fill="#5a5a5a"/><path d="M2.5 8Q8 2.5 13.5 8Q8 13.5 2.5 8z" fill="#fff"/><circle cx="8" cy="8" r="1.6" fill="none" stroke="#5a5a5a" stroke-width="1"/></svg>
<div class="t" style="left:1856px;top:675px;font-size:14px;color:#000;">User.Comments</div>
<div class="a" style="left:1802px;top:685px;width:118px;height:5px;background:#f0f0f0;"></div>
<div class="a" style="left:1809px;top:694px;width:16px;height:16px;background:#fff;border:1px solid #333"></div>
<svg style="left:1812px;top:698px;" width="10" height="8" viewBox="0 0 10 8"><path d="M0.5 4L3.5 7L9.5 0.5" fill="none" stroke="#333" stroke-width="1.2"/></svg>
<div class="t" style="left:1829px;top:695px;font-size:13.5px;color:#000;">使用电路板叠层颜色</div>
<div class="a" style="left:1809px;top:721px;width:16px;height:16px;background:#fff;border:1px solid #333"></div>
<div class="t" style="left:1829px;top:722px;font-size:13.5px;color:#000;">使用电路板编辑器颜色</div>
<div class="a" style="left:1805px;top:741px;width:115px;height:1px;background:#c8c8c8;"></div>
<div class="t" style="left:1807px;top:753px;font-size:14px;color:#000;">预设 (Ctrl+Tab):</div>
<div class="a" style="left:1807px;top:776px;width:120px;height:28px;background:#e1e1e1;border:1px solid #adadad"></div>
<div class="t" style="left:1812px;top:782px;font-size:15px;color:#000;">---</div>
<div class="t" style="left:1807px;top:813px;font-size:14px;color:#000;">视角 (Shift+Tab):</div>
<div class="a" style="left:1807px;top:836px;width:120px;height:28px;background:#e1e1e1;border:1px solid #adadad"></div>
<div class="t" style="left:1812px;top:842px;font-size:15px;color:#000;">---</div>
<div class="a" style="left:860px;top:870px;width:1060px;height:29px;background:#f0f0f0;border-top:1px solid #d8d8d8"></div>
<div class="a" style="left:1373px;top:873px;width:1px;height:24px;background:#d8d8d8;"></div>
<div class="a" style="left:1552px;top:873px;width:1px;height:24px;background:#d8d8d8;"></div>
<div class="a" style="left:1692px;top:873px;width:1px;height:24px;background:#d8d8d8;"></div>
<div class="a" style="left:1833px;top:873px;width:1px;height:24px;background:#d8d8d8;"></div>
<div class="t" style="left:863px;top:878px;font-size:15px;color:#000;">渲染时间 <span style="font-size:16px">15 ms</span></div>
<div class="t" style="left:1558px;top:879px;font-size:16px;color:#000;">dx 0.00</div>
<div class="t" style="left:1698px;top:879px;font-size:16px;color:#000;">dy 0.00</div>
<div class="t" style="left:1838px;top:879px;font-size:16px;color:#000;">zoom 0.68</div>
</body></html>
